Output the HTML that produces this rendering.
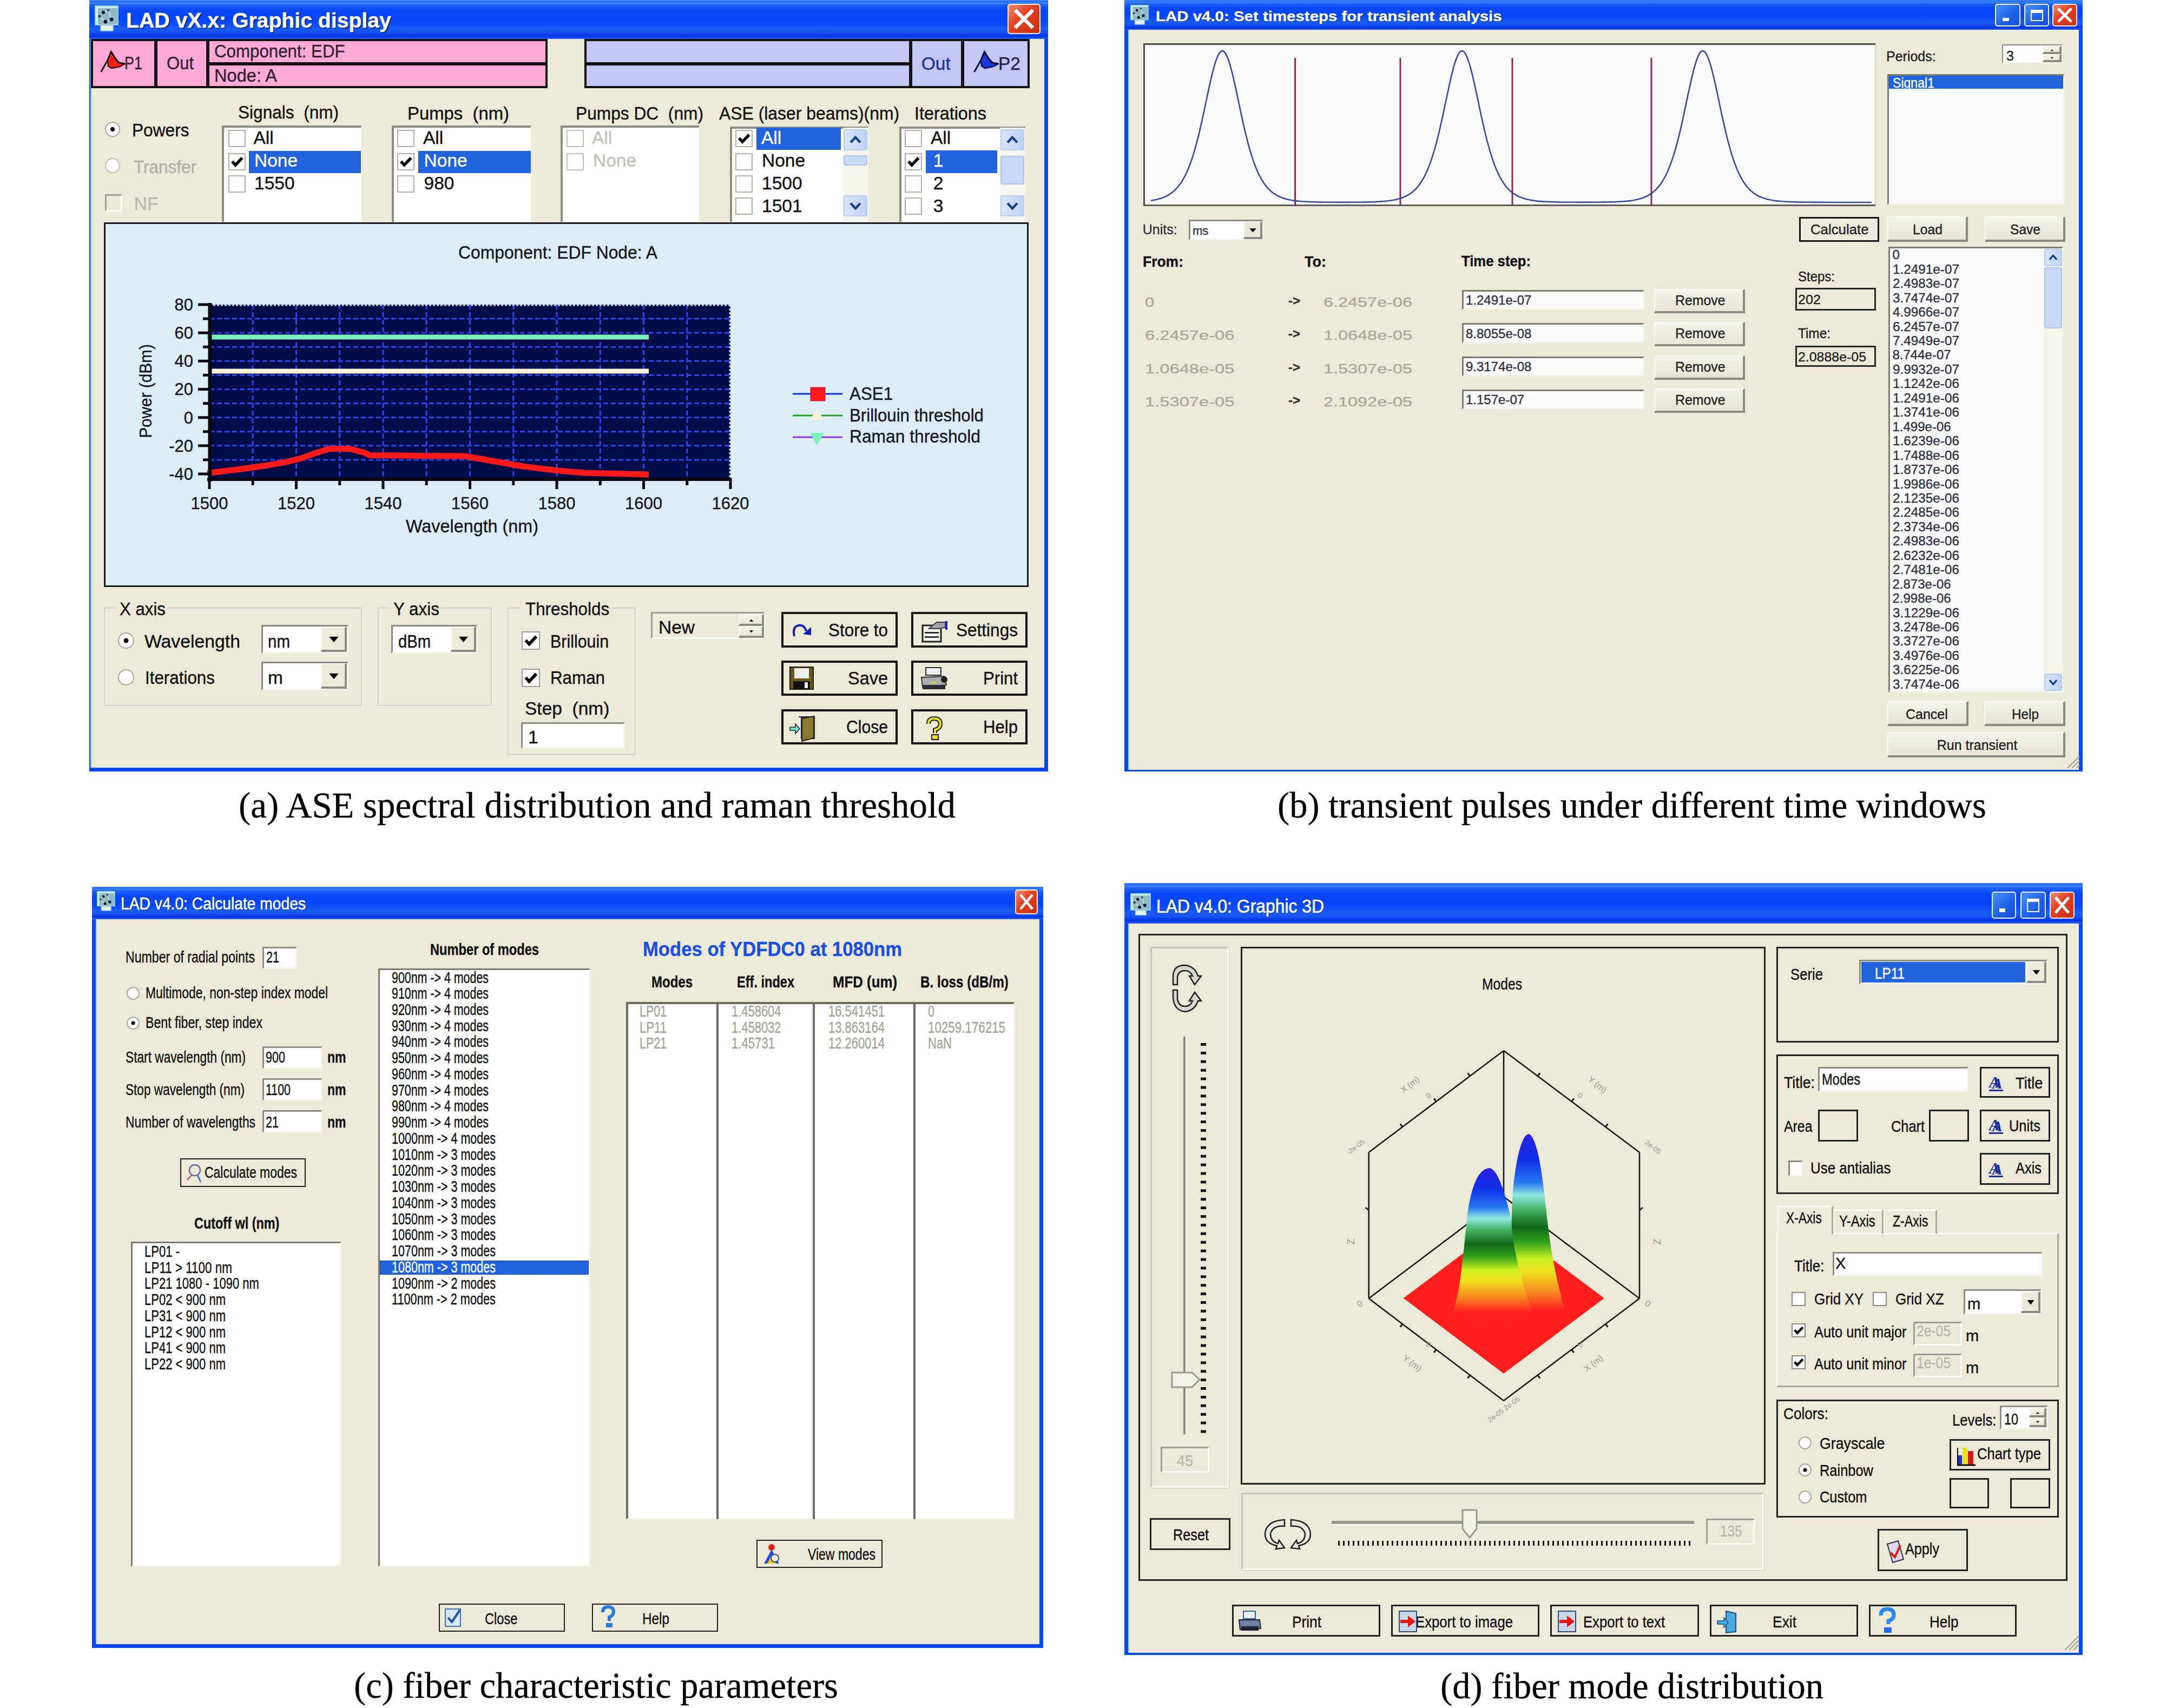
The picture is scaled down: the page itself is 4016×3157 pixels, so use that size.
<!DOCTYPE html><html><head><meta charset="utf-8"><style>
html,body{margin:0;padding:0;background:#fff;}
body{width:4016px;height:3157px;position:relative;overflow:hidden;font-family:"Liberation Sans",sans-serif;}
body div, body svg{position:absolute;}
.t{white-space:pre;line-height:normal;}
</style></head><body>
<div style="left:165.0px;top:0.0px;width:1772.0px;height:1426.0px;background:#0848F0;"></div>
<div style="left:165.0px;top:0.0px;width:1772.0px;height:72.0px;background:linear-gradient(#5AA0F0 0%,#2060F8 3%,#3A88F0 7%,#1C5CF4 14%,#0846F8 28%,#0644F8 50%,#0E4EF8 62%,#1A5CF4 74%,#1652F4 84%,#0032E8 93%,#2A62F0 100%);"></div>
<div style="left:168.0px;top:72.0px;width:1766.0px;height:1347.0px;background:#ECE9D8;"></div>
<div style="left:1930.0px;top:72.0px;width:7.0px;height:1354.0px;background:#0848F0;"></div>
<div style="left:167.0px;top:72.0px;width:2.0px;height:1347.0px;background:#8EC0F0;"></div>
<div style="left:1862.0px;top:7.0px;width:61.0px;height:56.0px;background:linear-gradient(135deg,#F08A70,#E0401F 45%,#C8300F);border:2px solid #F4F0F0;border-radius:5px;box-sizing:border-box;"></div>
<svg style="left:1862px;top:7px" width="61" height="56"><path d="M16.470000000000002 14.0 L44.53 42.0 M44.53 14.0 L16.470000000000002 42.0" stroke="#fff" stroke-width="6.7" stroke-linecap="square"/></svg>
<svg style="left:175px;top:10px" width="46.0" height="48.0" viewBox="0 0 46 48"><rect x="0" y="0" width="44" height="37" fill="#9ED0E8"/><rect x="2" y="2" width="40" height="33" fill="#C8F2EE"/><rect x="6" y="5" width="36" height="30" fill="#8EBAC4"/><rect x="11" y="37" width="23" height="10" fill="#E4F2EE" stroke="#9ED0E8" stroke-width="1.5"/><path d="M16 13 L9 20 L20 30 L31 26 L25 9 Z" stroke="#C8E0E8" stroke-width="2" fill="none"/><circle cx="16" cy="13" r="3.2" fill="#101830"/><circle cx="9" cy="20" r="2.8" fill="#404860"/><circle cx="20" cy="30" r="3.4" fill="#101020"/><circle cx="31" cy="26" r="3.6" fill="#0A1850"/><circle cx="25" cy="9" r="2.4" fill="#405070"/></svg>
<div class="t" style="left:232.5px;top:16.2px;font-size:38.40px;color:#fff;font-weight:700;font-family:'Liberation Sans', sans-serif;transform:scaleX(1.0204);transform-origin:0 0;text-shadow:2px 2px 1px #0A2A80;-webkit-text-stroke:0.35px #fff;">LAD vX.x: Graphic display</div>
<div style="left:168.0px;top:72.0px;width:844.0px;height:91.0px;background:#FFA9D6;border:4px solid #151015;box-sizing:border-box;"></div>
<div style="left:285.0px;top:72.0px;width:6.0px;height:91.0px;background:#151015;"></div>
<div style="left:381.0px;top:72.0px;width:6.0px;height:91.0px;background:#151015;"></div>
<div style="left:387.0px;top:115.0px;width:625.0px;height:6.0px;background:#151015;"></div>
<div style="left:1080.0px;top:72.0px;width:823.0px;height:91.0px;background:#C4C6F4;border:4px solid #151015;box-sizing:border-box;"></div>
<div style="left:1680.0px;top:72.0px;width:6.0px;height:91.0px;background:#151015;"></div>
<div style="left:1776.0px;top:72.0px;width:6.0px;height:91.0px;background:#151015;"></div>
<div style="left:1080.0px;top:115.0px;width:602.0px;height:6.0px;background:#151015;"></div>
<svg style="left:180px;top:90px" width="60" height="50"><path d="M19 21 L25.4 5.5 L33 18 L40 26 L51 28 L42 33 L26 36 L20 32 Z" fill="#FF2018" stroke="#3A0808" stroke-width="2.5" stroke-linejoin="round"/><path d="M6.6 43 L19 21 L25.4 5.5 L33 18 L40 26 L51 28" stroke="#201018" stroke-width="3" fill="none"/></svg>
<div class="t" style="left:230.0px;top:98.2px;font-size:33.50px;color:#302030;font-weight:400;font-family:'Liberation Sans', sans-serif;transform:scaleX(0.8041);transform-origin:0 0;-webkit-text-stroke:0.35px #302030;">P1</div>
<div class="t" style="left:308.0px;top:98.2px;font-size:33.50px;color:#302030;font-weight:400;font-family:'Liberation Sans', sans-serif;transform:scaleX(0.9270);transform-origin:0 0;-webkit-text-stroke:0.35px #302030;">Out</div>
<div class="t" style="left:396.0px;top:75.7px;font-size:33.50px;color:#302030;font-weight:400;font-family:'Liberation Sans', sans-serif;transform:scaleX(0.9336);transform-origin:0 0;-webkit-text-stroke:0.35px #302030;">Component: EDF</div>
<div class="t" style="left:396.0px;top:120.7px;font-size:33.50px;color:#302030;font-weight:400;font-family:'Liberation Sans', sans-serif;transform:scaleX(0.9727);transform-origin:0 0;-webkit-text-stroke:0.35px #302030;">Node: A</div>
<svg style="left:1794px;top:90px" width="60" height="50"><path d="M19 21 L25.4 5.5 L33 18 L40 26 L51 28 L42 33 L26 36 L20 32 Z" fill="#1838D8" stroke="#0A1050" stroke-width="2.5" stroke-linejoin="round"/><path d="M6.6 43 L19 21 L25.4 5.5 L33 18 L40 26 L51 28" stroke="#101040" stroke-width="3" fill="none"/></svg>
<div class="t" style="left:1702.7px;top:98.7px;font-size:33.50px;color:#1A30A0;font-weight:400;font-family:'Liberation Sans', sans-serif;-webkit-text-stroke:0.35px #1A30A0;">Out</div>
<div class="t" style="left:1845.0px;top:98.7px;font-size:33.50px;color:#202050;font-weight:400;font-family:'Liberation Sans', sans-serif;-webkit-text-stroke:0.35px #202050;">P2</div>
<svg style="left:193px;top:224px" width="30" height="30"><circle cx="15" cy="15" r="13" fill="#fff" stroke="#A8A8A0" stroke-width="2"/><circle cx="15" cy="15" r="4.16" fill="#000"/></svg>
<div class="t" style="left:244.4px;top:222.3px;font-size:33.50px;color:#101010;font-weight:400;font-family:'Liberation Sans', sans-serif;transform:scaleX(0.9443);transform-origin:0 0;-webkit-text-stroke:0.35px #101010;">Powers</div>
<svg style="left:193px;top:291px" width="30" height="30"><circle cx="15" cy="15" r="13" fill="#fff" stroke="#C0C0B8" stroke-width="2"/></svg>
<div class="t" style="left:247.0px;top:289.7px;font-size:33.50px;color:#B0B0A8;font-weight:400;font-family:'Liberation Sans', sans-serif;transform:scaleX(0.9397);transform-origin:0 0;-webkit-text-stroke:0.35px #B0B0A8;">Transfer</div>
<div style="left:194.0px;top:359.0px;width:32.0px;height:32.0px;border-style:solid;border-width:3px;border-color:#A0A098 #FFF #FFF #A0A098;box-sizing:border-box;"></div>
<div class="t" style="left:247.7px;top:357.7px;font-size:33.50px;color:#B8B8B0;font-weight:400;font-family:'Liberation Sans', sans-serif;-webkit-text-stroke:0.35px #B8B8B0;">NF</div>
<div class="t" style="left:439.6px;top:189.2px;font-size:33.50px;color:#101010;font-weight:400;font-family:'Liberation Sans', sans-serif;transform:scaleX(0.9427);transform-origin:0 0;-webkit-text-stroke:0.35px #101010;">Signals  (nm)</div>
<div class="t" style="left:753.0px;top:190.7px;font-size:33.50px;color:#101010;font-weight:400;font-family:'Liberation Sans', sans-serif;transform:scaleX(0.9803);transform-origin:0 0;-webkit-text-stroke:0.35px #101010;">Pumps  (nm)</div>
<div class="t" style="left:1064.4px;top:190.7px;font-size:33.50px;color:#101010;font-weight:400;font-family:'Liberation Sans', sans-serif;transform:scaleX(0.9462);transform-origin:0 0;-webkit-text-stroke:0.35px #101010;">Pumps DC  (nm)</div>
<div class="t" style="left:1329.0px;top:190.7px;font-size:33.50px;color:#101010;font-weight:400;font-family:'Liberation Sans', sans-serif;transform:scaleX(0.9517);transform-origin:0 0;-webkit-text-stroke:0.35px #101010;">ASE (laser beams)(nm)</div>
<div class="t" style="left:1690.0px;top:190.7px;font-size:33.50px;color:#101010;font-weight:400;font-family:'Liberation Sans', sans-serif;transform:scaleX(0.9648);transform-origin:0 0;-webkit-text-stroke:0.35px #101010;">Iterations</div>
<div style="left:410.0px;top:232.0px;width:259.0px;height:178.0px;background:#fff;border-style:solid;border-width:4px 2px 0 4px;border-color:#8C8C84 #F4F4EE #F4F4EE #8C8C84;box-sizing:border-box;"></div>
<div style="left:724.0px;top:232.0px;width:258.0px;height:178.0px;background:#fff;border-style:solid;border-width:4px 2px 0 4px;border-color:#8C8C84 #F4F4EE #F4F4EE #8C8C84;box-sizing:border-box;"></div>
<div style="left:1036.0px;top:232.0px;width:257.0px;height:178.0px;background:#fff;border-style:solid;border-width:4px 2px 0 4px;border-color:#8C8C84 #F4F4EE #F4F4EE #8C8C84;box-sizing:border-box;"></div>
<div style="left:1349.0px;top:234.0px;width:256.0px;height:176.0px;background:#fff;border-style:solid;border-width:4px 2px 0 4px;border-color:#8C8C84 #F4F4EE #F4F4EE #8C8C84;box-sizing:border-box;"></div>
<div style="left:1662.0px;top:234.0px;width:233.0px;height:176.0px;background:#fff;border-style:solid;border-width:4px 2px 0 4px;border-color:#8C8C84 #F4F4EE #F4F4EE #8C8C84;box-sizing:border-box;"></div>
<div style="left:422.0px;top:240.0px;width:32.0px;height:32.0px;background:#fff;border:2px solid #B0B0A8;box-sizing:border-box;"></div>
<div style="left:422.0px;top:283.0px;width:32.0px;height:32.0px;background:#fff;border:2px solid #B0B0A8;box-sizing:border-box;"></div>
<svg style="left:422px;top:283px" width="32" height="32" viewBox="0 0 10 10"><path d="M2.2 4.8 L4.1 6.9 L8 2.8" stroke="#000" stroke-width="1.7" fill="none"/></svg>
<div style="left:422.0px;top:324.0px;width:32.0px;height:32.0px;background:#fff;border:2px solid #B0B0A8;box-sizing:border-box;"></div>
<div style="left:460.0px;top:279.0px;width:207.0px;height:41.0px;background:#2262DC;"></div>
<div class="t" style="left:468.5px;top:236.1px;font-size:33.50px;color:#101010;font-weight:400;font-family:'Liberation Sans', sans-serif;-webkit-text-stroke:0.35px #101010;">All</div>
<div class="t" style="left:470.0px;top:277.7px;font-size:33.50px;color:#fff;font-weight:400;font-family:'Liberation Sans', sans-serif;-webkit-text-stroke:0.35px #fff;">None</div>
<div class="t" style="left:470.0px;top:320.3px;font-size:33.50px;color:#101010;font-weight:400;font-family:'Liberation Sans', sans-serif;-webkit-text-stroke:0.35px #101010;">1550</div>
<div style="left:734.0px;top:240.0px;width:32.0px;height:32.0px;background:#fff;border:2px solid #B0B0A8;box-sizing:border-box;"></div>
<div style="left:734.0px;top:283.0px;width:32.0px;height:32.0px;background:#fff;border:2px solid #B0B0A8;box-sizing:border-box;"></div>
<svg style="left:734px;top:283px" width="32" height="32" viewBox="0 0 10 10"><path d="M2.2 4.8 L4.1 6.9 L8 2.8" stroke="#000" stroke-width="1.7" fill="none"/></svg>
<div style="left:734.0px;top:324.0px;width:32.0px;height:32.0px;background:#fff;border:2px solid #B0B0A8;box-sizing:border-box;"></div>
<div style="left:773.0px;top:279.0px;width:208.0px;height:41.0px;background:#2262DC;"></div>
<div class="t" style="left:782.0px;top:236.1px;font-size:33.50px;color:#101010;font-weight:400;font-family:'Liberation Sans', sans-serif;-webkit-text-stroke:0.35px #101010;">All</div>
<div class="t" style="left:783.6px;top:277.7px;font-size:33.50px;color:#fff;font-weight:400;font-family:'Liberation Sans', sans-serif;-webkit-text-stroke:0.35px #fff;">None</div>
<div class="t" style="left:783.6px;top:320.3px;font-size:33.50px;color:#101010;font-weight:400;font-family:'Liberation Sans', sans-serif;-webkit-text-stroke:0.35px #101010;">980</div>
<div style="left:1047.0px;top:240.0px;width:32.0px;height:32.0px;background:#fff;border:2px solid #C0C0B8;box-sizing:border-box;"></div>
<div style="left:1047.0px;top:283.0px;width:32.0px;height:32.0px;background:#fff;border:2px solid #C0C0B8;box-sizing:border-box;"></div>
<div class="t" style="left:1094.0px;top:236.1px;font-size:33.50px;color:#C0C0B8;font-weight:400;font-family:'Liberation Sans', sans-serif;-webkit-text-stroke:0.35px #C0C0B8;">All</div>
<div class="t" style="left:1096.0px;top:277.7px;font-size:33.50px;color:#C0C0B8;font-weight:400;font-family:'Liberation Sans', sans-serif;-webkit-text-stroke:0.35px #C0C0B8;">None</div>
<div style="left:1359.0px;top:240.0px;width:32.0px;height:32.0px;background:#fff;border:2px solid #B0B0A8;box-sizing:border-box;"></div>
<svg style="left:1359px;top:240px" width="32" height="32" viewBox="0 0 10 10"><path d="M2.2 4.8 L4.1 6.9 L8 2.8" stroke="#000" stroke-width="1.7" fill="none"/></svg>
<div style="left:1359.0px;top:283.0px;width:32.0px;height:32.0px;background:#fff;border:2px solid #B0B0A8;box-sizing:border-box;"></div>
<div style="left:1359.0px;top:324.0px;width:32.0px;height:32.0px;background:#fff;border:2px solid #B0B0A8;box-sizing:border-box;"></div>
<div style="left:1359.0px;top:365.0px;width:32.0px;height:32.0px;background:#fff;border:2px solid #B0B0A8;box-sizing:border-box;"></div>
<div style="left:1398.0px;top:236.0px;width:156.0px;height:41.0px;background:#2262DC;"></div>
<div class="t" style="left:1407.0px;top:236.1px;font-size:33.50px;color:#fff;font-weight:400;font-family:'Liberation Sans', sans-serif;-webkit-text-stroke:0.35px #fff;">All</div>
<div class="t" style="left:1408.0px;top:277.7px;font-size:33.50px;color:#101010;font-weight:400;font-family:'Liberation Sans', sans-serif;-webkit-text-stroke:0.35px #101010;">None</div>
<div class="t" style="left:1408.0px;top:320.3px;font-size:33.50px;color:#101010;font-weight:400;font-family:'Liberation Sans', sans-serif;-webkit-text-stroke:0.35px #101010;">1500</div>
<div class="t" style="left:1408.0px;top:361.7px;font-size:33.50px;color:#101010;font-weight:400;font-family:'Liberation Sans', sans-serif;-webkit-text-stroke:0.35px #101010;">1501</div>
<div style="left:1558.0px;top:236.0px;width:45.0px;height:172.0px;background:#F4F3EC;"></div>
<div style="left:1559.0px;top:239.0px;width:44.0px;height:39.0px;background:linear-gradient(90deg,#D8E4FA,#C0D2F6);border:2px solid #B8CCF0;border-radius:4px;box-sizing:border-box;"></div>
<svg style="left:1559px;top:239px" width="44" height="39"><path d="M13.2 24.18 L22.0 14.82 L30.799999999999997 24.18" stroke="#1A3E8A" stroke-width="4.4" fill="none"/></svg>
<div style="left:1559.0px;top:287.0px;width:44.0px;height:19.0px;background:#C8D8F8;border:2px solid #B0C4EE;border-radius:4px;box-sizing:border-box;"></div>
<div style="left:1559.0px;top:361.0px;width:44.0px;height:39.0px;background:linear-gradient(90deg,#D8E4FA,#C0D2F6);border:2px solid #B8CCF0;border-radius:4px;box-sizing:border-box;"></div>
<svg style="left:1559px;top:361px" width="44" height="39"><path d="M13.2 14.82 L22.0 24.18 L30.799999999999997 14.82" stroke="#1A3E8A" stroke-width="4.4" fill="none"/></svg>
<div style="left:1672.0px;top:240.0px;width:32.0px;height:32.0px;background:#fff;border:2px solid #B0B0A8;box-sizing:border-box;"></div>
<div style="left:1672.0px;top:283.0px;width:32.0px;height:32.0px;background:#fff;border:2px solid #B0B0A8;box-sizing:border-box;"></div>
<svg style="left:1672px;top:283px" width="32" height="32" viewBox="0 0 10 10"><path d="M2.2 4.8 L4.1 6.9 L8 2.8" stroke="#000" stroke-width="1.7" fill="none"/></svg>
<div style="left:1672.0px;top:324.0px;width:32.0px;height:32.0px;background:#fff;border:2px solid #B0B0A8;box-sizing:border-box;"></div>
<div style="left:1672.0px;top:365.0px;width:32.0px;height:32.0px;background:#fff;border:2px solid #B0B0A8;box-sizing:border-box;"></div>
<div style="left:1711.0px;top:278.0px;width:132.0px;height:42.0px;background:#2262DC;"></div>
<div class="t" style="left:1720.0px;top:236.1px;font-size:33.50px;color:#101010;font-weight:400;font-family:'Liberation Sans', sans-serif;-webkit-text-stroke:0.35px #101010;">All</div>
<div class="t" style="left:1724.8px;top:277.7px;font-size:33.50px;color:#fff;font-weight:400;font-family:'Liberation Sans', sans-serif;-webkit-text-stroke:0.35px #fff;">1</div>
<div class="t" style="left:1724.8px;top:320.3px;font-size:33.50px;color:#101010;font-weight:400;font-family:'Liberation Sans', sans-serif;-webkit-text-stroke:0.35px #101010;">2</div>
<div class="t" style="left:1724.8px;top:361.7px;font-size:33.50px;color:#101010;font-weight:400;font-family:'Liberation Sans', sans-serif;-webkit-text-stroke:0.35px #101010;">3</div>
<div style="left:1848.0px;top:236.0px;width:45.0px;height:172.0px;background:#F4F3EC;"></div>
<div style="left:1849.0px;top:239.0px;width:44.0px;height:39.0px;background:linear-gradient(90deg,#D8E4FA,#C0D2F6);border:2px solid #B8CCF0;border-radius:4px;box-sizing:border-box;"></div>
<svg style="left:1849px;top:239px" width="44" height="39"><path d="M13.2 24.18 L22.0 14.82 L30.799999999999997 24.18" stroke="#1A3E8A" stroke-width="4.4" fill="none"/></svg>
<div style="left:1849.0px;top:288.0px;width:44.0px;height:53.0px;background:#C8D8F8;border:2px solid #B0C4EE;border-radius:4px;box-sizing:border-box;"></div>
<div style="left:1849.0px;top:361.0px;width:44.0px;height:39.0px;background:linear-gradient(90deg,#D8E4FA,#C0D2F6);border:2px solid #B8CCF0;border-radius:4px;box-sizing:border-box;"></div>
<svg style="left:1849px;top:361px" width="44" height="39"><path d="M13.2 14.82 L22.0 24.18 L30.799999999999997 14.82" stroke="#1A3E8A" stroke-width="4.4" fill="none"/></svg>
<div style="left:192.0px;top:411.0px;width:1709.0px;height:674.0px;background:#DCEDF8;border:3px solid #1A1A20;box-sizing:border-box;"></div>
<div class="t" style="left:847.0px;top:448.4px;font-size:33.50px;color:#151520;font-weight:400;font-family:'Liberation Sans', sans-serif;transform:scaleX(0.9499);transform-origin:0 0;-webkit-text-stroke:0.35px #151520;">Component: EDF Node: A</div>
<div style="left:387.0px;top:563.0px;width:963.0px;height:324.0px;background:#000C48;"></div>
<svg style="left:0px;top:0px" width="1940" height="1100"><line x1="467.2" y1="563" x2="467.2" y2="887" stroke="#2846F0" stroke-width="3" stroke-dasharray="9 5"/><line x1="547.5" y1="563" x2="547.5" y2="887" stroke="#2846F0" stroke-width="3" stroke-dasharray="9 5"/><line x1="627.8" y1="563" x2="627.8" y2="887" stroke="#2846F0" stroke-width="3" stroke-dasharray="9 5"/><line x1="708.0" y1="563" x2="708.0" y2="887" stroke="#2846F0" stroke-width="3" stroke-dasharray="9 5"/><line x1="788.2" y1="563" x2="788.2" y2="887" stroke="#2846F0" stroke-width="3" stroke-dasharray="9 5"/><line x1="868.5" y1="563" x2="868.5" y2="887" stroke="#2846F0" stroke-width="3" stroke-dasharray="9 5"/><line x1="948.8" y1="563" x2="948.8" y2="887" stroke="#2846F0" stroke-width="3" stroke-dasharray="9 5"/><line x1="1029.0" y1="563" x2="1029.0" y2="887" stroke="#2846F0" stroke-width="3" stroke-dasharray="9 5"/><line x1="1109.2" y1="563" x2="1109.2" y2="887" stroke="#2846F0" stroke-width="3" stroke-dasharray="9 5"/><line x1="1189.5" y1="563" x2="1189.5" y2="887" stroke="#2846F0" stroke-width="3" stroke-dasharray="9 5"/><line x1="1269.8" y1="563" x2="1269.8" y2="887" stroke="#2846F0" stroke-width="3" stroke-dasharray="9 5"/><line x1="387" y1="589.1" x2="1350" y2="589.1" stroke="#2846F0" stroke-width="3" stroke-dasharray="9 5"/><line x1="387" y1="615.2" x2="1350" y2="615.2" stroke="#2846F0" stroke-width="3" stroke-dasharray="9 5"/><line x1="387" y1="641.2" x2="1350" y2="641.2" stroke="#2846F0" stroke-width="3" stroke-dasharray="9 5"/><line x1="387" y1="667.3" x2="1350" y2="667.3" stroke="#2846F0" stroke-width="3" stroke-dasharray="9 5"/><line x1="387" y1="693.4" x2="1350" y2="693.4" stroke="#2846F0" stroke-width="3" stroke-dasharray="9 5"/><line x1="387" y1="719.5" x2="1350" y2="719.5" stroke="#2846F0" stroke-width="3" stroke-dasharray="9 5"/><line x1="387" y1="745.6" x2="1350" y2="745.6" stroke="#2846F0" stroke-width="3" stroke-dasharray="9 5"/><line x1="387" y1="771.7" x2="1350" y2="771.7" stroke="#2846F0" stroke-width="3" stroke-dasharray="9 5"/><line x1="387" y1="797.8" x2="1350" y2="797.8" stroke="#2846F0" stroke-width="3" stroke-dasharray="9 5"/><line x1="387" y1="823.8" x2="1350" y2="823.8" stroke="#2846F0" stroke-width="3" stroke-dasharray="9 5"/><line x1="387" y1="849.9" x2="1350" y2="849.9" stroke="#2846F0" stroke-width="3" stroke-dasharray="9 5"/><line x1="387" y1="564" x2="1350" y2="564" stroke="#C8D0F0" stroke-width="3" stroke-dasharray="4 3"/><line x1="1349" y1="563" x2="1349" y2="887" stroke="#C8D0F0" stroke-width="3" stroke-dasharray="4 3"/><line x1="382" y1="623" x2="1199" y2="623" stroke="#78F2BA" stroke-width="9"/><line x1="382" y1="686" x2="1199" y2="686" stroke="#FAF2D8" stroke-width="9"/><polyline points="383,874.6 407,871.8 444,867.2 490,860.8 526.5,854.3 554,847.9 582,837.8 609,829.5 646,829.5 674,836.8 683,841.4 770,842.4 859,843 967,862 1033,870 1080,874 1199,877" stroke="#FF1A1A" stroke-width="11" fill="none" stroke-linejoin="round"/><line x1="388" y1="560" x2="388" y2="890" stroke="#0A0A10" stroke-width="7"/><line x1="383" y1="886" x2="1352" y2="886" stroke="#0A0A10" stroke-width="6"/><line x1="366" y1="563.0" x2="389" y2="563.0" stroke="#0A0A10" stroke-width="5"/><line x1="375" y1="589.1" x2="389" y2="589.1" stroke="#0A0A10" stroke-width="5"/><line x1="366" y1="615.2" x2="389" y2="615.2" stroke="#0A0A10" stroke-width="5"/><line x1="375" y1="641.2" x2="389" y2="641.2" stroke="#0A0A10" stroke-width="5"/><line x1="366" y1="667.3" x2="389" y2="667.3" stroke="#0A0A10" stroke-width="5"/><line x1="375" y1="693.4" x2="389" y2="693.4" stroke="#0A0A10" stroke-width="5"/><line x1="366" y1="719.5" x2="389" y2="719.5" stroke="#0A0A10" stroke-width="5"/><line x1="375" y1="745.6" x2="389" y2="745.6" stroke="#0A0A10" stroke-width="5"/><line x1="366" y1="771.7" x2="389" y2="771.7" stroke="#0A0A10" stroke-width="5"/><line x1="375" y1="797.8" x2="389" y2="797.8" stroke="#0A0A10" stroke-width="5"/><line x1="366" y1="823.8" x2="389" y2="823.8" stroke="#0A0A10" stroke-width="5"/><line x1="375" y1="849.9" x2="389" y2="849.9" stroke="#0A0A10" stroke-width="5"/><line x1="366" y1="876.0" x2="389" y2="876.0" stroke="#0A0A10" stroke-width="5"/><line x1="387.0" y1="884" x2="387.0" y2="904" stroke="#0A0A10" stroke-width="5"/><line x1="467.2" y1="884" x2="467.2" y2="897" stroke="#0A0A10" stroke-width="5"/><line x1="547.5" y1="884" x2="547.5" y2="904" stroke="#0A0A10" stroke-width="5"/><line x1="627.8" y1="884" x2="627.8" y2="897" stroke="#0A0A10" stroke-width="5"/><line x1="708.0" y1="884" x2="708.0" y2="904" stroke="#0A0A10" stroke-width="5"/><line x1="788.2" y1="884" x2="788.2" y2="897" stroke="#0A0A10" stroke-width="5"/><line x1="868.5" y1="884" x2="868.5" y2="904" stroke="#0A0A10" stroke-width="5"/><line x1="948.8" y1="884" x2="948.8" y2="897" stroke="#0A0A10" stroke-width="5"/><line x1="1029.0" y1="884" x2="1029.0" y2="904" stroke="#0A0A10" stroke-width="5"/><line x1="1109.2" y1="884" x2="1109.2" y2="897" stroke="#0A0A10" stroke-width="5"/><line x1="1189.5" y1="884" x2="1189.5" y2="904" stroke="#0A0A10" stroke-width="5"/><line x1="1269.8" y1="884" x2="1269.8" y2="897" stroke="#0A0A10" stroke-width="5"/><line x1="1350.0" y1="884" x2="1350.0" y2="904" stroke="#0A0A10" stroke-width="5"/><line x1="1465" y1="728" x2="1557" y2="728" stroke="#1030F0" stroke-width="3"/><rect x="1498" y="716" width="27" height="25" fill="#FF1A1A" stroke="#C01040" stroke-width="1"/><line x1="1465" y1="768" x2="1557" y2="768" stroke="#20A020" stroke-width="3"/><path d="M1510 754 L1523 776 L1497 776 Z" fill="#FAF2D8"/><line x1="1465" y1="808" x2="1557" y2="808" stroke="#9030E0" stroke-width="3"/><path d="M1497 800 L1523 800 L1510 823 Z" fill="#78F2BA"/></svg>
<div class="t" style="left:322.6px;top:545.9px;font-size:31.00px;color:#151520;font-weight:400;font-family:'Liberation Sans', sans-serif;-webkit-text-stroke:0.35px #151520;">80</div>
<div class="t" style="left:322.6px;top:598.1px;font-size:31.00px;color:#151520;font-weight:400;font-family:'Liberation Sans', sans-serif;-webkit-text-stroke:0.35px #151520;">60</div>
<div class="t" style="left:322.6px;top:650.3px;font-size:31.00px;color:#151520;font-weight:400;font-family:'Liberation Sans', sans-serif;-webkit-text-stroke:0.35px #151520;">40</div>
<div class="t" style="left:322.6px;top:702.4px;font-size:31.00px;color:#151520;font-weight:400;font-family:'Liberation Sans', sans-serif;-webkit-text-stroke:0.35px #151520;">20</div>
<div class="t" style="left:339.8px;top:754.6px;font-size:31.00px;color:#151520;font-weight:400;font-family:'Liberation Sans', sans-serif;-webkit-text-stroke:0.35px #151520;">0</div>
<div class="t" style="left:312.2px;top:806.8px;font-size:31.00px;color:#151520;font-weight:400;font-family:'Liberation Sans', sans-serif;-webkit-text-stroke:0.35px #151520;">-20</div>
<div class="t" style="left:312.2px;top:858.9px;font-size:31.00px;color:#151520;font-weight:400;font-family:'Liberation Sans', sans-serif;-webkit-text-stroke:0.35px #151520;">-40</div>
<div class="t" style="left:352.5px;top:912.9px;font-size:31.00px;color:#151520;font-weight:400;font-family:'Liberation Sans', sans-serif;-webkit-text-stroke:0.35px #151520;">1500</div>
<div class="t" style="left:513.0px;top:912.9px;font-size:31.00px;color:#151520;font-weight:400;font-family:'Liberation Sans', sans-serif;-webkit-text-stroke:0.35px #151520;">1520</div>
<div class="t" style="left:673.5px;top:912.9px;font-size:31.00px;color:#151520;font-weight:400;font-family:'Liberation Sans', sans-serif;-webkit-text-stroke:0.35px #151520;">1540</div>
<div class="t" style="left:834.0px;top:912.9px;font-size:31.00px;color:#151520;font-weight:400;font-family:'Liberation Sans', sans-serif;-webkit-text-stroke:0.35px #151520;">1560</div>
<div class="t" style="left:994.5px;top:912.9px;font-size:31.00px;color:#151520;font-weight:400;font-family:'Liberation Sans', sans-serif;-webkit-text-stroke:0.35px #151520;">1580</div>
<div class="t" style="left:1155.0px;top:912.9px;font-size:31.00px;color:#151520;font-weight:400;font-family:'Liberation Sans', sans-serif;-webkit-text-stroke:0.35px #151520;">1600</div>
<div class="t" style="left:1315.5px;top:912.9px;font-size:31.00px;color:#151520;font-weight:400;font-family:'Liberation Sans', sans-serif;-webkit-text-stroke:0.35px #151520;">1620</div>
<div class="t" style="left:749.6px;top:953.7px;font-size:33.50px;color:#151520;font-weight:400;font-family:'Liberation Sans', sans-serif;transform:scaleX(0.9655);transform-origin:0 0;-webkit-text-stroke:0.35px #151520;">Wavelength (nm)</div>
<div class="t" style="left:269px;top:723px;font-size:32px;color:#151520;-webkit-text-stroke:0.35px #151520;transform:translate(-50%,-50%) rotate(-90deg) scaleX(0.93);">Power (dBm)</div>
<div class="t" style="left:1570.0px;top:709.0px;font-size:33.50px;color:#151520;font-weight:400;font-family:'Liberation Sans', sans-serif;transform:scaleX(0.9347);transform-origin:0 0;-webkit-text-stroke:0.35px #151520;">ASE1</div>
<div class="t" style="left:1570.0px;top:748.7px;font-size:33.50px;color:#151520;font-weight:400;font-family:'Liberation Sans', sans-serif;transform:scaleX(0.9312);transform-origin:0 0;-webkit-text-stroke:0.35px #151520;">Brillouin threshold</div>
<div class="t" style="left:1570.0px;top:787.7px;font-size:33.50px;color:#151520;font-weight:400;font-family:'Liberation Sans', sans-serif;transform:scaleX(0.9486);transform-origin:0 0;-webkit-text-stroke:0.35px #151520;">Raman threshold</div>
<div style="left:193.0px;top:1123.0px;width:476.0px;height:182.0px;border:2px solid #D0D0BF;box-shadow:inset 1px 1px 0 #fff, 1px 1px 0 #fff;box-sizing:border-box;"></div>
<div style="left:214.0px;top:1119.0px;width:96.0px;height:8.0px;background:#ECE9D8;"></div>
<div class="t" style="left:220.5px;top:1107.1px;font-size:33.50px;color:#101010;font-weight:400;font-family:'Liberation Sans', sans-serif;transform:scaleX(0.9311);transform-origin:0 0;-webkit-text-stroke:0.35px #101010;">X axis</div>
<svg style="left:217px;top:1168px" width="32" height="32"><circle cx="16" cy="16" r="14" fill="#fff" stroke="#A8A8A0" stroke-width="2"/><circle cx="16" cy="16" r="4.48" fill="#000"/></svg>
<div class="t" style="left:266.5px;top:1166.7px;font-size:33.50px;color:#101010;font-weight:400;font-family:'Liberation Sans', sans-serif;transform:scaleX(1.0074);transform-origin:0 0;-webkit-text-stroke:0.35px #101010;">Wavelength</div>
<svg style="left:217px;top:1236px" width="32" height="32"><circle cx="16" cy="16" r="14" fill="#fff" stroke="#A8A8A0" stroke-width="2"/></svg>
<div class="t" style="left:268.0px;top:1233.7px;font-size:33.50px;color:#101010;font-weight:400;font-family:'Liberation Sans', sans-serif;transform:scaleX(0.9358);transform-origin:0 0;-webkit-text-stroke:0.35px #101010;">Iterations</div>
<div style="left:483.0px;top:1155.0px;width:161.0px;height:53.0px;background:#fff;border-style:solid;border-width:3px;border-color:#8C8C84 #F4F4EE #F4F4EE #8C8C84;box-sizing:border-box;"></div>
<div style="left:593.0px;top:1158.0px;width:48.0px;height:47.0px;background:#ECE9D8;border-style:solid;border-width:2px 4px 4px 2px;border-color:#F8F8F4 #8A8A80 #8A8A80 #F8F8F4;box-sizing:border-box;"></div>
<svg style="left:593px;top:1158px" width="48" height="47"><path d="M15.36 18.8 L32.64 18.8 L24.0 29.14 Z" fill="#000"/></svg>
<div class="t" style="left:495.0px;top:1166.7px;font-size:33.50px;color:#101010;font-weight:400;font-family:'Liberation Sans', sans-serif;transform:scaleX(0.8805);transform-origin:0 0;-webkit-text-stroke:0.35px #101010;">nm</div>
<div style="left:483.0px;top:1223.0px;width:161.0px;height:53.0px;background:#fff;border-style:solid;border-width:3px;border-color:#8C8C84 #F4F4EE #F4F4EE #8C8C84;box-sizing:border-box;"></div>
<div style="left:593.0px;top:1226.0px;width:48.0px;height:47.0px;background:#ECE9D8;border-style:solid;border-width:2px 4px 4px 2px;border-color:#F8F8F4 #8A8A80 #8A8A80 #F8F8F4;box-sizing:border-box;"></div>
<svg style="left:593px;top:1226px" width="48" height="47"><path d="M15.36 18.8 L32.64 18.8 L24.0 29.14 Z" fill="#000"/></svg>
<div class="t" style="left:495.0px;top:1233.7px;font-size:33.50px;color:#101010;font-weight:400;font-family:'Liberation Sans', sans-serif;-webkit-text-stroke:0.35px #101010;">m</div>
<div style="left:698.0px;top:1123.0px;width:211.0px;height:182.0px;border:2px solid #D0D0BF;box-shadow:inset 1px 1px 0 #fff, 1px 1px 0 #fff;box-sizing:border-box;"></div>
<div style="left:718.0px;top:1119.0px;width:82.0px;height:8.0px;background:#ECE9D8;"></div>
<div class="t" style="left:726.7px;top:1107.1px;font-size:33.50px;color:#101010;font-weight:400;font-family:'Liberation Sans', sans-serif;transform:scaleX(0.9380);transform-origin:0 0;-webkit-text-stroke:0.35px #101010;">Y axis</div>
<div style="left:723.0px;top:1155.0px;width:160.0px;height:53.0px;background:#fff;border-style:solid;border-width:3px;border-color:#8C8C84 #F4F4EE #F4F4EE #8C8C84;box-sizing:border-box;"></div>
<div style="left:833.0px;top:1158.0px;width:47.0px;height:47.0px;background:#ECE9D8;border-style:solid;border-width:2px 4px 4px 2px;border-color:#F8F8F4 #8A8A80 #8A8A80 #F8F8F4;box-sizing:border-box;"></div>
<svg style="left:833px;top:1158px" width="47" height="47"><path d="M15.040000000000001 18.8 L31.96 18.8 L23.5 29.14 Z" fill="#000"/></svg>
<div class="t" style="left:736.0px;top:1166.7px;font-size:33.50px;color:#101010;font-weight:400;font-family:'Liberation Sans', sans-serif;transform:scaleX(0.8716);transform-origin:0 0;-webkit-text-stroke:0.35px #101010;">dBm</div>
<div style="left:938.0px;top:1123.0px;width:237.0px;height:273.0px;border:2px solid #D0D0BF;box-shadow:inset 1px 1px 0 #fff, 1px 1px 0 #fff;box-sizing:border-box;"></div>
<div style="left:962.0px;top:1119.0px;width:148.0px;height:8.0px;background:#ECE9D8;"></div>
<div class="t" style="left:970.7px;top:1107.1px;font-size:33.50px;color:#101010;font-weight:400;font-family:'Liberation Sans', sans-serif;transform:scaleX(0.9357);transform-origin:0 0;-webkit-text-stroke:0.35px #101010;">Thresholds</div>
<div style="left:964.0px;top:1167.0px;width:34.0px;height:34.0px;background:#fff;border:2px solid #A0A098;box-sizing:border-box;"></div>
<svg style="left:964px;top:1167px" width="34" height="34" viewBox="0 0 10 10"><path d="M2.2 4.8 L4.1 6.9 L8 2.8" stroke="#000" stroke-width="1.7" fill="none"/></svg>
<div class="t" style="left:1016.7px;top:1166.7px;font-size:33.50px;color:#101010;font-weight:400;font-family:'Liberation Sans', sans-serif;transform:scaleX(0.9069);transform-origin:0 0;-webkit-text-stroke:0.35px #101010;">Brillouin</div>
<div style="left:964.0px;top:1236.0px;width:34.0px;height:34.0px;background:#fff;border:2px solid #A0A098;box-sizing:border-box;"></div>
<svg style="left:964px;top:1236px" width="34" height="34" viewBox="0 0 10 10"><path d="M2.2 4.8 L4.1 6.9 L8 2.8" stroke="#000" stroke-width="1.7" fill="none"/></svg>
<div class="t" style="left:1016.7px;top:1233.7px;font-size:33.50px;color:#101010;font-weight:400;font-family:'Liberation Sans', sans-serif;transform:scaleX(0.9349);transform-origin:0 0;-webkit-text-stroke:0.35px #101010;">Raman</div>
<div class="t" style="left:970.0px;top:1291.2px;font-size:33.50px;color:#101010;font-weight:400;font-family:'Liberation Sans', sans-serif;-webkit-text-stroke:0.35px #101010;">Step  (nm)</div>
<div style="left:963.0px;top:1335.0px;width:192.0px;height:49.0px;background:#fff;border-style:solid;border-width:3px;border-color:#8C8C84 #F4F4EE #F4F4EE #8C8C84;box-sizing:border-box;"></div>
<div class="t" style="left:976.0px;top:1343.7px;font-size:33.50px;color:#101010;font-weight:400;font-family:'Liberation Sans', sans-serif;-webkit-text-stroke:0.35px #101010;">1</div>
<div style="left:1203.0px;top:1131.0px;width:211.0px;height:50.0px;background:#ECE9D8;border-style:solid;border-width:3px;border-color:#9C9C94 #FAFAF4 #FAFAF4 #9C9C94;box-sizing:border-box;"></div>
<div class="t" style="left:1217.0px;top:1140.7px;font-size:33.50px;color:#101010;font-weight:400;font-family:'Liberation Sans', sans-serif;-webkit-text-stroke:0.35px #101010;">New</div>
<div style="left:1365.0px;top:1135.0px;width:47.0px;height:22.0px;background:linear-gradient(#F4F2E8,#E8E5D6);border-style:solid;border-width:2px 4px 4px 2px;border-color:#F8F8F4 #8A8A80 #8A8A80 #F8F8F4;box-sizing:border-box;"></div>
<div style="left:1365.0px;top:1157.0px;width:47.0px;height:22.0px;background:linear-gradient(#F4F2E8,#E8E5D6);border-style:solid;border-width:2px 4px 4px 2px;border-color:#F8F8F4 #8A8A80 #8A8A80 #F8F8F4;box-sizing:border-box;"></div>
<svg style="left:1365px;top:1135px" width="47" height="44"><path d="M19.54 13.64 L27.46 13.64 L23.5 9.68 Z M19.54 30.36 L27.46 30.36 L23.5 34.32 Z" fill="#000"/></svg>
<div style="left:1444.0px;top:1131.0px;width:215.0px;height:66.0px;background:#ECE9D8;border:4px solid #151515;box-sizing:border-box;"></div>
<div class="t" style="left:1531.0px;top:1145.7px;font-size:33.50px;color:#101010;font-weight:400;font-family:'Liberation Sans', sans-serif;transform:scaleX(0.9382);transform-origin:0 0;-webkit-text-stroke:0.35px #101010;">Store to</div>
<div style="left:1684.0px;top:1131.0px;width:215.0px;height:66.0px;background:#ECE9D8;border:4px solid #151515;box-sizing:border-box;"></div>
<div class="t" style="left:1767.0px;top:1145.7px;font-size:33.50px;color:#101010;font-weight:400;font-family:'Liberation Sans', sans-serif;transform:scaleX(0.9414);transform-origin:0 0;-webkit-text-stroke:0.35px #101010;">Settings</div>
<div style="left:1444.0px;top:1221.0px;width:215.0px;height:65.0px;background:#ECE9D8;border:4px solid #151515;box-sizing:border-box;"></div>
<div class="t" style="left:1567.0px;top:1235.2px;font-size:33.50px;color:#101010;font-weight:400;font-family:'Liberation Sans', sans-serif;transform:scaleX(0.9688);transform-origin:0 0;-webkit-text-stroke:0.35px #101010;">Save</div>
<div style="left:1684.0px;top:1221.0px;width:215.0px;height:65.0px;background:#ECE9D8;border:4px solid #151515;box-sizing:border-box;"></div>
<div class="t" style="left:1817.0px;top:1235.2px;font-size:33.50px;color:#101010;font-weight:400;font-family:'Liberation Sans', sans-serif;transform:scaleX(0.9297);transform-origin:0 0;-webkit-text-stroke:0.35px #101010;">Print</div>
<div style="left:1444.0px;top:1311.0px;width:215.0px;height:65.0px;background:#ECE9D8;border:4px solid #151515;box-sizing:border-box;"></div>
<div class="t" style="left:1564.0px;top:1325.2px;font-size:33.50px;color:#101010;font-weight:400;font-family:'Liberation Sans', sans-serif;transform:scaleX(0.8996);transform-origin:0 0;-webkit-text-stroke:0.35px #101010;">Close</div>
<div style="left:1684.0px;top:1311.0px;width:215.0px;height:65.0px;background:#ECE9D8;border:4px solid #151515;box-sizing:border-box;"></div>
<div class="t" style="left:1817.0px;top:1325.2px;font-size:33.50px;color:#101010;font-weight:400;font-family:'Liberation Sans', sans-serif;transform:scaleX(0.9297);transform-origin:0 0;-webkit-text-stroke:0.35px #101010;">Help</div>
<svg style="left:1462px;top:1152px" width="42" height="26"><path d="M6 24 Q2 6 14 4 Q24 2 28 14" stroke="#1020B0" stroke-width="4" fill="none"/><path d="M22 20 L37 7 L37 22 Z" fill="#1020B0"/></svg>
<svg style="left:1703px;top:1146px" width="50" height="42"><rect x="2" y="10" width="34" height="30" fill="#F4F4F0" stroke="#202020" stroke-width="3"/><rect x="6" y="22" width="26" height="3" fill="#303030"/><rect x="6" y="30" width="26" height="3" fill="#303030"/><path d="M14 16 L28 4 L44 4 L44 14 L30 16 Z" fill="#A0A0A8" stroke="#404048" stroke-width="2"/><rect x="44" y="2" width="4" height="16" fill="#2020C0"/></svg>
<svg style="left:1459px;top:1232px" width="48" height="44"><rect x="1" y="1" width="43" height="41" fill="#6A5A18" stroke="#1A1A1A" stroke-width="2"/><rect x="9" y="3" width="27" height="19" fill="#EDEDED"/><rect x="7" y="27" width="31" height="15" fill="#101010"/><rect x="28" y="29" width="6" height="11" fill="#E8E8E8"/></svg>
<svg style="left:1701px;top:1232px" width="52" height="44"><rect x="10" y="2" width="28" height="14" fill="#F0F0F0" stroke="#303030" stroke-width="2"/><path d="M2 20 L44 18 L48 34 L4 38 Z" fill="#A8AEB0" stroke="#303038" stroke-width="2"/><rect x="4" y="34" width="42" height="8" fill="#2A2A30"/><circle cx="44" cy="24" r="6" fill="#202020"/><rect x="20" y="28" width="10" height="3" fill="#E8D020"/></svg>
<svg style="left:1458px;top:1322px" width="54" height="50"><rect x="18" y="2" width="30" height="42" fill="#2A2A30"/><path d="M24 6 L46 2 L46 42 L24 48 Z" fill="#8A7A30" stroke="#202020" stroke-width="2"/><rect x="18" y="4" width="4" height="42" fill="#F0F0F0"/><path d="M2 22 L12 22 L12 16 L20 25 L12 34 L12 28 L2 28 Z" fill="#70E8D0" stroke="#202020" stroke-width="1.5"/></svg>
<svg style="left:1708px;top:1324px" width="38" height="46"><path d="M8 14 Q8 4 18 4 Q30 4 30 14 Q30 22 20 25 L20 31" stroke="#202020" stroke-width="8" fill="none"/><path d="M8 14 Q8 4 18 4 Q30 4 30 14 Q30 22 20 25 L20 31" stroke="#E8E020" stroke-width="4" fill="none"/><rect x="14" y="34" width="12" height="9" fill="#E8E020" stroke="#202020" stroke-width="2"/></svg>
<div class="t" style="left:441.0px;top:1449.4px;font-size:68.00px;color:#000;font-weight:400;font-family:'Liberation Serif', serif;transform:scaleX(0.9826);transform-origin:0 0;-webkit-text-stroke:0.3px #000;">(a) ASE spectral distribution and raman threshold</div>
<div style="left:2078.0px;top:0.0px;width:1771.0px;height:1426.0px;background:#0848F0;"></div>
<div style="left:2078.0px;top:0.0px;width:1771.0px;height:55.0px;background:linear-gradient(#5AA0F0 0%,#2060F8 3%,#3A88F0 7%,#1C5CF4 14%,#0846F8 28%,#0644F8 50%,#0E4EF8 62%,#1A5CF4 74%,#1652F4 84%,#0032E8 93%,#2A62F0 100%);"></div>
<div style="left:2085.0px;top:55.0px;width:1757.0px;height:1368.0px;background:#ECE9D8;"></div>
<div style="left:2085.0px;top:55.0px;width:2.0px;height:1368.0px;background:#A8CCF4;"></div>
<div style="left:3687.0px;top:7.0px;width:47.0px;height:42.0px;background:linear-gradient(135deg,#4A90F8,#1E5FE8 60%,#1850D8);border:2px solid #F0F4FF;border-radius:5px;box-sizing:border-box;"></div>
<div style="left:3701.1px;top:33.0px;width:11.8px;height:5.5px;background:#fff;"></div>
<div style="left:3741.0px;top:7.0px;width:46.0px;height:42.0px;background:linear-gradient(135deg,#4A90F8,#1E5FE8 60%,#1850D8);border:2px solid #F0F4FF;border-radius:5px;box-sizing:border-box;"></div>
<div style="left:3752.5px;top:17.5px;width:23.0px;height:21.0px;border:2px solid #fff;border-top-width:6px;box-sizing:border-box;"></div>
<div style="left:3793.0px;top:7.0px;width:46.0px;height:42.0px;background:linear-gradient(135deg,#F08A70,#E0401F 45%,#C8300F);border:2px solid #F4F0F0;border-radius:5px;box-sizing:border-box;"></div>
<svg style="left:3793px;top:7px" width="46" height="42"><path d="M12.420000000000002 10.5 L33.58 31.5 M33.58 10.5 L12.420000000000002 31.5" stroke="#fff" stroke-width="5.1" stroke-linecap="square"/></svg>
<svg style="left:2089px;top:9px" width="35.3" height="36.8" viewBox="0 0 46 48"><rect x="0" y="0" width="44" height="37" fill="#9ED0E8"/><rect x="2" y="2" width="40" height="33" fill="#C8F2EE"/><rect x="6" y="5" width="36" height="30" fill="#8EBAC4"/><rect x="11" y="37" width="23" height="10" fill="#E4F2EE" stroke="#9ED0E8" stroke-width="1.5"/><path d="M16 13 L9 20 L20 30 L31 26 L25 9 Z" stroke="#C8E0E8" stroke-width="2" fill="none"/><circle cx="16" cy="13" r="3.2" fill="#101830"/><circle cx="9" cy="20" r="2.8" fill="#404860"/><circle cx="20" cy="30" r="3.4" fill="#101020"/><circle cx="31" cy="26" r="3.6" fill="#0A1850"/><circle cx="25" cy="9" r="2.4" fill="#405070"/></svg>
<div class="t" style="left:2136.0px;top:15.7px;font-size:25.70px;color:#fff;font-weight:700;font-family:'Liberation Sans', sans-serif;transform:scaleX(1.1460);transform-origin:0 0;text-shadow:1px 1px 1px #0A2A80;-webkit-text-stroke:0.35px #fff;">LAD v4.0: Set timesteps for transient analysis</div>
<div style="left:2113.0px;top:80.0px;width:1354.0px;height:301.0px;background:#FAFAFA;border-style:solid;border-width:3px 2px 3px 3px;border-color:#4A4A48 #D8D8D0 #5A5A58 #4A4A48;box-sizing:border-box;"></div>
<svg style="left:0;top:0" width="3500" height="400"><line x1="2393.6" y1="107" x2="2393.6" y2="380" stroke="#8A2A5A" stroke-width="3"/><line x1="2588" y1="107" x2="2588" y2="380" stroke="#8A2A5A" stroke-width="3"/><line x1="2795" y1="107" x2="2795" y2="380" stroke="#8A2A5A" stroke-width="3"/><line x1="3052" y1="107" x2="3052" y2="380" stroke="#8A2A5A" stroke-width="3"/><polyline points="2127,370.7 2130,370.2 2133,369.7 2136,369.1 2139,368.4 2142,367.6 2145,366.7 2148,365.7 2151,364.5 2154,363.2 2157,361.8 2160,360.1 2163,358.2 2166,356.0 2169,353.5 2172,350.8 2175,347.6 2178,344.1 2181,340.2 2184,335.7 2187,330.7 2190,325.2 2193,319.0 2196,312.1 2199,304.6 2202,296.2 2205,287.1 2208,277.1 2211,266.4 2214,254.8 2217,242.5 2220,229.5 2223,216.0 2226,202.0 2229,187.8 2232,173.6 2235,159.7 2238,146.3 2241,133.8 2244,122.5 2247,112.7 2250,104.7 2253,98.8 2256,95.2 2259,94.0 2262,95.2 2265,98.8 2268,104.7 2271,112.7 2274,122.5 2277,133.8 2280,146.3 2283,159.7 2286,173.6 2289,187.8 2292,202.0 2295,216.0 2298,229.5 2301,242.5 2304,254.8 2307,266.4 2310,277.1 2313,287.1 2316,296.2 2319,304.6 2322,312.1 2325,319.0 2328,325.2 2331,330.7 2334,335.7 2337,340.2 2340,344.1 2343,347.6 2346,350.8 2349,353.5 2352,356.0 2355,358.2 2358,360.1 2361,361.8 2364,363.2 2367,364.5 2370,365.7 2373,366.7 2376,367.6 2379,368.4 2382,369.1 2385,369.7 2388,370.2 2391,370.7 2394,371.1 2397,371.4 2400,371.8 2403,372.0 2406,372.3 2409,372.5 2412,372.7 2415,372.8 2418,373.0 2421,373.1 2424,373.2 2427,373.3 2430,373.4 2433,373.5 2436,373.5 2439,373.6 2442,373.6 2445,373.7 2448,373.7 2451,373.7 2454,373.8 2457,373.8 2460,373.8 2463,373.8 2466,373.8 2469,373.9 2472,373.9 2475,373.9 2478,373.9 2481,373.9 2484,373.9 2487,373.9 2490,373.9 2493,373.9 2496,373.8 2499,373.8 2502,373.8 2505,373.8 2508,373.8 2511,373.7 2514,373.7 2517,373.7 2520,373.6 2523,373.6 2526,373.5 2529,373.4 2532,373.4 2535,373.3 2538,373.2 2541,373.1 2544,372.9 2547,372.8 2550,372.6 2553,372.4 2556,372.2 2559,371.9 2562,371.7 2565,371.3 2568,371.0 2571,370.5 2574,370.0 2577,369.5 2580,368.9 2583,368.1 2586,367.3 2589,366.4 2592,365.3 2595,364.1 2598,362.8 2601,361.2 2604,359.5 2607,357.5 2610,355.2 2613,352.6 2616,349.8 2619,346.5 2622,342.9 2625,338.7 2628,334.1 2631,329.0 2634,323.2 2637,316.8 2640,309.7 2643,301.9 2646,293.3 2649,283.9 2652,273.6 2655,262.6 2658,250.8 2661,238.3 2664,225.1 2667,211.4 2670,197.3 2673,183.1 2676,168.9 2679,155.1 2682,142.0 2685,129.9 2688,119.0 2691,109.8 2694,102.5 2697,97.4 2700,94.5 2703,94.1 2706,96.2 2709,100.6 2712,107.2 2715,115.8 2718,126.1 2721,137.8 2724,150.7 2727,164.3 2730,178.3 2733,192.6 2736,206.7 2739,220.6 2742,233.9 2745,246.7 2748,258.8 2751,270.0 2754,280.5 2757,290.2 2760,299.1 2763,307.2 2766,314.5 2769,321.1 2772,327.1 2775,332.5 2778,337.3 2781,341.5 2784,345.3 2787,348.7 2790,351.7 2793,354.4 2796,356.7 2799,358.8 2802,360.6 2805,362.3 2808,363.7 2811,364.9 2814,366.1 2817,367.0 2820,367.9 2823,368.6 2826,369.3 2829,369.9 2832,370.4 2835,370.8 2838,371.2 2841,371.6 2844,371.9 2847,372.1 2850,372.4 2853,372.6 2856,372.7 2859,372.9 2862,373.0 2865,373.1 2868,373.2 2871,373.3 2874,373.4 2877,373.5 2880,373.6 2883,373.6 2886,373.7 2889,373.7 2892,373.7 2895,373.8 2898,373.8 2901,373.8 2904,373.8 2907,373.8 2910,373.8 2913,373.9 2916,373.9 2919,373.9 2922,373.9 2925,373.9 2928,373.9 2931,373.9 2934,373.9 2937,373.9 2940,373.8 2943,373.8 2946,373.8 2949,373.8 2952,373.8 2955,373.7 2958,373.7 2961,373.7 2964,373.6 2967,373.6 2970,373.5 2973,373.5 2976,373.4 2979,373.3 2982,373.2 2985,373.1 2988,373.0 2991,372.8 2994,372.7 2997,372.5 3000,372.3 3003,372.0 3006,371.8 3009,371.4 3012,371.1 3015,370.7 3018,370.2 3021,369.7 3024,369.1 3027,368.4 3030,367.6 3033,366.7 3036,365.7 3039,364.5 3042,363.2 3045,361.8 3048,360.1 3051,358.2 3054,356.0 3057,353.5 3060,350.8 3063,347.6 3066,344.1 3069,340.2 3072,335.7 3075,330.7 3078,325.2 3081,319.0 3084,312.1 3087,304.6 3090,296.2 3093,287.1 3096,277.1 3099,266.4 3102,254.8 3105,242.5 3108,229.5 3111,216.0 3114,202.0 3117,187.8 3120,173.6 3123,159.7 3126,146.3 3129,133.8 3132,122.5 3135,112.7 3138,104.7 3141,98.8 3144,95.2 3147,94.0 3150,95.2 3153,98.8 3156,104.7 3159,112.7 3162,122.5 3165,133.8 3168,146.3 3171,159.7 3174,173.6 3177,187.8 3180,202.0 3183,216.0 3186,229.5 3189,242.5 3192,254.8 3195,266.4 3198,277.1 3201,287.1 3204,296.2 3207,304.6 3210,312.1 3213,319.0 3216,325.2 3219,330.7 3222,335.7 3225,340.2 3228,344.1 3231,347.6 3234,350.8 3237,353.5 3240,356.0 3243,358.2 3246,360.1 3249,361.8 3252,363.2 3255,364.5 3258,365.7 3261,366.7 3264,367.6 3267,368.4 3270,369.1 3273,369.7 3276,370.2 3279,370.7 3282,371.1 3285,371.4 3288,371.8 3291,372.0 3294,372.3 3297,372.5 3300,372.7 3303,372.8 3306,373.0 3309,373.1 3312,373.2 3315,373.3 3318,373.4 3321,373.5 3324,373.5 3327,373.6 3330,373.6 3333,373.7 3336,373.7 3339,373.8 3342,373.8 3345,373.8 3348,373.8 3351,373.9 3354,373.9 3357,373.9 3360,373.9 3363,373.9 3366,373.9 3369,373.9 3372,373.9 3375,374.0 3378,374.0 3381,374.0 3384,374.0 3387,374.0 3390,374.0 3393,374.0 3396,374.0 3399,374.0 3402,374.0 3405,374.0 3408,374.0 3411,374.0 3414,374.0 3417,374.0 3420,374.0 3423,374.0 3426,374.0 3429,374.0 3432,374.0 3435,374.0 3438,374.0 3441,374.0 3444,374.0 3447,374.0 3450,374.0 3453,374.0 3456,374.0 3459,374.0" fill="none" stroke="#3848A0" stroke-width="2.6"/></svg>
<div class="t" style="left:3486.0px;top:90.4px;font-size:25.00px;color:#202020;font-weight:400;font-family:'Liberation Sans', sans-serif;-webkit-text-stroke:0.35px #202020;">Periods:</div>
<div style="left:3700.0px;top:82.0px;width:112.0px;height:35.0px;background:#fff;border-style:solid;border-width:2px;border-color:#8C8C84 #F4F4EE #F4F4EE #8C8C84;box-sizing:border-box;"></div>
<div class="t" style="left:3708.0px;top:89.4px;font-size:25.00px;color:#202020;font-weight:400;font-family:'Liberation Sans', sans-serif;-webkit-text-stroke:0.35px #202020;">3</div>
<div style="left:3775.0px;top:85.0px;width:35.0px;height:15.0px;background:linear-gradient(#F4F2E8,#E8E5D6);border-style:solid;border-width:2px 4px 4px 2px;border-color:#F8F8F4 #8A8A80 #8A8A80 #F8F8F4;box-sizing:border-box;"></div>
<div style="left:3775.0px;top:100.0px;width:35.0px;height:15.0px;background:linear-gradient(#F4F2E8,#E8E5D6);border-style:solid;border-width:2px 4px 4px 2px;border-color:#F8F8F4 #8A8A80 #8A8A80 #F8F8F4;box-sizing:border-box;"></div>
<svg style="left:3775px;top:85px" width="35" height="30"><path d="M14.8 9.3 L20.2 9.3 L17.5 6.600000000000001 Z M14.8 20.7 L20.2 20.7 L17.5 23.4 Z" fill="#000"/></svg>
<div style="left:3488.0px;top:137.0px;width:328.0px;height:242.0px;background:#FAFAFA;border-style:solid;border-width:3px;border-color:#7C7C74 #F4F4EE #F4F4EE #7C7C74;box-sizing:border-box;"></div>
<div style="left:3491.0px;top:140.0px;width:322.0px;height:24.0px;background:#2262DC;"></div>
<div class="t" style="left:3498.0px;top:138.7px;font-size:25.00px;color:#fff;font-weight:400;font-family:'Liberation Sans', sans-serif;transform:scaleX(0.9235);transform-origin:0 0;-webkit-text-stroke:0.35px #fff;">Signal1</div>
<div class="t" style="left:2111.7px;top:410.2px;font-size:25.00px;color:#303040;font-weight:400;font-family:'Liberation Sans', sans-serif;-webkit-text-stroke:0.35px #303040;">Units:</div>
<div style="left:2197.0px;top:406.0px;width:138.0px;height:38.0px;background:#fff;border-style:solid;border-width:3px;border-color:#8C8C84 #F4F4EE #F4F4EE #8C8C84;box-sizing:border-box;"></div>
<div style="left:2298.0px;top:409.0px;width:35.0px;height:33.0px;background:#ECE9D8;border-style:solid;border-width:2px 4px 4px 2px;border-color:#F8F8F4 #8A8A80 #8A8A80 #F8F8F4;box-sizing:border-box;"></div>
<svg style="left:2298px;top:409px" width="35" height="33"><path d="M11.200000000000001 13.200000000000001 L23.8 13.200000000000001 L17.5 20.46 Z" fill="#000"/></svg>
<div class="t" style="left:2204.0px;top:414.1px;font-size:22.00px;color:#303040;font-weight:400;font-family:'Liberation Sans', sans-serif;-webkit-text-stroke:0.35px #303040;">ms</div>
<div style="left:3325.0px;top:401.0px;width:148.0px;height:46.0px;background:#EEEBDC;border:3px solid #151515;box-sizing:border-box;"></div>
<div class="t" style="left:3346.0px;top:409.8px;font-size:25.00px;color:#202020;font-weight:400;font-family:'Liberation Sans', sans-serif;transform:scaleX(1.0312);transform-origin:0 0;-webkit-text-stroke:0.35px #202020;">Calculate</div>
<div style="left:3488.0px;top:400.0px;width:149.0px;height:47.0px;background:linear-gradient(#F4F2E8,#E8E5D6);border-style:solid;border-width:2px 4px 4px 2px;border-color:#F8F8F4 #8A8A80 #8A8A80 #F8F8F4;box-sizing:border-box;"></div>
<div class="t" style="left:3535.0px;top:409.8px;font-size:25.00px;color:#202020;font-weight:400;font-family:'Liberation Sans', sans-serif;transform:scaleX(0.9888);transform-origin:0 0;-webkit-text-stroke:0.35px #202020;">Load</div>
<div style="left:3668.0px;top:400.0px;width:149.0px;height:47.0px;background:linear-gradient(#F4F2E8,#E8E5D6);border-style:solid;border-width:2px 4px 4px 2px;border-color:#F8F8F4 #8A8A80 #8A8A80 #F8F8F4;box-sizing:border-box;"></div>
<div class="t" style="left:3715.0px;top:409.8px;font-size:25.00px;color:#202020;font-weight:400;font-family:'Liberation Sans', sans-serif;transform:scaleX(0.9825);transform-origin:0 0;-webkit-text-stroke:0.35px #202020;">Save</div>
<div class="t" style="left:2111.7px;top:469.1px;font-size:27.00px;color:#101010;font-weight:700;font-family:'Liberation Sans', sans-serif;transform:scaleX(0.9798);transform-origin:0 0;-webkit-text-stroke:0.35px #101010;">From:</div>
<div class="t" style="left:2411.0px;top:469.1px;font-size:27.00px;color:#101010;font-weight:700;font-family:'Liberation Sans', sans-serif;-webkit-text-stroke:0.35px #101010;">To:</div>
<div class="t" style="left:2700.7px;top:468.4px;font-size:27.00px;color:#101010;font-weight:700;font-family:'Liberation Sans', sans-serif;transform:scaleX(0.9510);transform-origin:0 0;-webkit-text-stroke:0.35px #101010;">Time step:</div>
<div class="t" style="left:2116.0px;top:545.0px;font-size:24.00px;color:#A8A898;font-weight:400;font-family:'Liberation Sans', sans-serif;transform:scaleX(1.2763);transform-origin:0 0;-webkit-text-stroke:0.35px #A8A898;">0</div>
<div class="t" style="left:2381.0px;top:542.0px;font-size:24.00px;color:#303030;font-weight:700;font-family:'Liberation Sans', sans-serif;-webkit-text-stroke:0.35px #303030;">-&gt;</div>
<div class="t" style="left:2445.8px;top:545.0px;font-size:24.00px;color:#A8A898;font-weight:400;font-family:'Liberation Sans', sans-serif;transform:scaleX(1.3505);transform-origin:0 0;-webkit-text-stroke:0.35px #A8A898;">6.2457e-06</div>
<div style="left:2702.0px;top:536.0px;width:337.0px;height:37.0px;background:#FAFAFA;border-style:solid;border-width:3px;border-color:#7C7C74 #F4F4EE #F4F4EE #7C7C74;box-sizing:border-box;"></div>
<div class="t" style="left:2709.0px;top:541.3px;font-size:24.00px;color:#303040;font-weight:400;font-family:'Liberation Sans', sans-serif;-webkit-text-stroke:0.35px #303040;">1.2491e-07</div>
<div style="left:3057.0px;top:534.0px;width:168.0px;height:45.0px;background:linear-gradient(#F4F2E8,#E8E5D6);border-style:solid;border-width:2px 4px 4px 2px;border-color:#F8F8F4 #8A8A80 #8A8A80 #F8F8F4;box-sizing:border-box;"></div>
<div class="t" style="left:3095.5px;top:541.1px;font-size:25.00px;color:#202020;font-weight:400;font-family:'Liberation Sans', sans-serif;transform:scaleX(0.9933);transform-origin:0 0;-webkit-text-stroke:0.35px #202020;">Remove</div>
<div class="t" style="left:2116.0px;top:606.3px;font-size:24.00px;color:#A8A898;font-weight:400;font-family:'Liberation Sans', sans-serif;transform:scaleX(1.3628);transform-origin:0 0;-webkit-text-stroke:0.35px #A8A898;">6.2457e-06</div>
<div class="t" style="left:2381.0px;top:603.3px;font-size:24.00px;color:#303030;font-weight:700;font-family:'Liberation Sans', sans-serif;-webkit-text-stroke:0.35px #303030;">-&gt;</div>
<div class="t" style="left:2445.8px;top:606.3px;font-size:24.00px;color:#A8A898;font-weight:400;font-family:'Liberation Sans', sans-serif;transform:scaleX(1.3505);transform-origin:0 0;-webkit-text-stroke:0.35px #A8A898;">1.0648e-05</div>
<div style="left:2702.0px;top:597.3px;width:337.0px;height:37.0px;background:#FAFAFA;border-style:solid;border-width:3px;border-color:#7C7C74 #F4F4EE #F4F4EE #7C7C74;box-sizing:border-box;"></div>
<div class="t" style="left:2709.0px;top:602.6px;font-size:24.00px;color:#303040;font-weight:400;font-family:'Liberation Sans', sans-serif;-webkit-text-stroke:0.35px #303040;">8.8055e-08</div>
<div style="left:3057.0px;top:595.3px;width:168.0px;height:45.0px;background:linear-gradient(#F4F2E8,#E8E5D6);border-style:solid;border-width:2px 4px 4px 2px;border-color:#F8F8F4 #8A8A80 #8A8A80 #F8F8F4;box-sizing:border-box;"></div>
<div class="t" style="left:3095.5px;top:602.4px;font-size:25.00px;color:#202020;font-weight:400;font-family:'Liberation Sans', sans-serif;transform:scaleX(0.9933);transform-origin:0 0;-webkit-text-stroke:0.35px #202020;">Remove</div>
<div class="t" style="left:2116.0px;top:667.8px;font-size:24.00px;color:#A8A898;font-weight:400;font-family:'Liberation Sans', sans-serif;transform:scaleX(1.3628);transform-origin:0 0;-webkit-text-stroke:0.35px #A8A898;">1.0648e-05</div>
<div class="t" style="left:2381.0px;top:664.8px;font-size:24.00px;color:#303030;font-weight:700;font-family:'Liberation Sans', sans-serif;-webkit-text-stroke:0.35px #303030;">-&gt;</div>
<div class="t" style="left:2445.8px;top:667.8px;font-size:24.00px;color:#A8A898;font-weight:400;font-family:'Liberation Sans', sans-serif;transform:scaleX(1.3505);transform-origin:0 0;-webkit-text-stroke:0.35px #A8A898;">1.5307e-05</div>
<div style="left:2702.0px;top:658.6px;width:337.0px;height:37.0px;background:#FAFAFA;border-style:solid;border-width:3px;border-color:#7C7C74 #F4F4EE #F4F4EE #7C7C74;box-sizing:border-box;"></div>
<div class="t" style="left:2709.0px;top:663.9px;font-size:24.00px;color:#303040;font-weight:400;font-family:'Liberation Sans', sans-serif;-webkit-text-stroke:0.35px #303040;">9.3174e-08</div>
<div style="left:3057.0px;top:656.6px;width:168.0px;height:45.0px;background:linear-gradient(#F4F2E8,#E8E5D6);border-style:solid;border-width:2px 4px 4px 2px;border-color:#F8F8F4 #8A8A80 #8A8A80 #F8F8F4;box-sizing:border-box;"></div>
<div class="t" style="left:3095.5px;top:663.9px;font-size:25.00px;color:#202020;font-weight:400;font-family:'Liberation Sans', sans-serif;transform:scaleX(0.9933);transform-origin:0 0;-webkit-text-stroke:0.35px #202020;">Remove</div>
<div class="t" style="left:2116.0px;top:728.8px;font-size:24.00px;color:#A8A898;font-weight:400;font-family:'Liberation Sans', sans-serif;transform:scaleX(1.3628);transform-origin:0 0;-webkit-text-stroke:0.35px #A8A898;">1.5307e-05</div>
<div class="t" style="left:2381.0px;top:725.8px;font-size:24.00px;color:#303030;font-weight:700;font-family:'Liberation Sans', sans-serif;-webkit-text-stroke:0.35px #303030;">-&gt;</div>
<div class="t" style="left:2445.8px;top:728.8px;font-size:24.00px;color:#A8A898;font-weight:400;font-family:'Liberation Sans', sans-serif;transform:scaleX(1.3505);transform-origin:0 0;-webkit-text-stroke:0.35px #A8A898;">2.1092e-05</div>
<div style="left:2702.0px;top:719.9px;width:337.0px;height:37.0px;background:#FAFAFA;border-style:solid;border-width:3px;border-color:#7C7C74 #F4F4EE #F4F4EE #7C7C74;box-sizing:border-box;"></div>
<div class="t" style="left:2709.0px;top:725.2px;font-size:24.00px;color:#303040;font-weight:400;font-family:'Liberation Sans', sans-serif;-webkit-text-stroke:0.35px #303040;">1.157e-07</div>
<div style="left:3057.0px;top:717.9px;width:168.0px;height:45.0px;background:linear-gradient(#F4F2E8,#E8E5D6);border-style:solid;border-width:2px 4px 4px 2px;border-color:#F8F8F4 #8A8A80 #8A8A80 #F8F8F4;box-sizing:border-box;"></div>
<div class="t" style="left:3095.5px;top:724.9px;font-size:25.00px;color:#202020;font-weight:400;font-family:'Liberation Sans', sans-serif;transform:scaleX(0.9933);transform-origin:0 0;-webkit-text-stroke:0.35px #202020;">Remove</div>
<div class="t" style="left:3322.7px;top:497.4px;font-size:25.00px;color:#202020;font-weight:400;font-family:'Liberation Sans', sans-serif;transform:scaleX(0.9594);transform-origin:0 0;-webkit-text-stroke:0.35px #202020;">Steps:</div>
<div style="left:3318.0px;top:532.0px;width:149.0px;height:42.0px;background:#ECE9D8;border:3px solid #252525;box-sizing:border-box;"></div>
<div class="t" style="left:3322.7px;top:539.7px;font-size:24.00px;color:#202020;font-weight:400;font-family:'Liberation Sans', sans-serif;transform:scaleX(1.0479);transform-origin:0 0;-webkit-text-stroke:0.35px #202020;">202</div>
<div class="t" style="left:3322.7px;top:602.4px;font-size:25.00px;color:#202020;font-weight:400;font-family:'Liberation Sans', sans-serif;transform:scaleX(0.9736);transform-origin:0 0;-webkit-text-stroke:0.35px #202020;">Time:</div>
<div style="left:3318.0px;top:639.0px;width:149.0px;height:39.0px;background:#ECE9D8;border:3px solid #252525;box-sizing:border-box;"></div>
<div class="t" style="left:3322.7px;top:646.3px;font-size:24.00px;color:#202020;font-weight:400;font-family:'Liberation Sans', sans-serif;transform:scaleX(1.0375);transform-origin:0 0;-webkit-text-stroke:0.35px #202020;">2.0888e-05</div>
<div style="left:3490.0px;top:456.0px;width:323.0px;height:824.0px;background:#FAFAFA;border-style:solid;border-width:3px;border-color:#7C7C74 #F4F4EE #F4F4EE #7C7C74;box-sizing:border-box;"></div>
<div class="t" style="left:3497.5px;top:457.3px;font-size:24.00px;color:#303040;font-weight:400;font-family:'Liberation Sans', sans-serif;-webkit-text-stroke:0.35px #303040;">0</div>
<div class="t" style="left:3497.5px;top:483.7px;font-size:24.00px;color:#303040;font-weight:400;font-family:'Liberation Sans', sans-serif;transform:scaleX(1.0128);transform-origin:0 0;-webkit-text-stroke:0.35px #303040;">1.2491e-07</div>
<div class="t" style="left:3497.5px;top:510.2px;font-size:24.00px;color:#303040;font-weight:400;font-family:'Liberation Sans', sans-serif;transform:scaleX(1.0128);transform-origin:0 0;-webkit-text-stroke:0.35px #303040;">2.4983e-07</div>
<div class="t" style="left:3497.5px;top:536.6px;font-size:24.00px;color:#303040;font-weight:400;font-family:'Liberation Sans', sans-serif;transform:scaleX(1.0128);transform-origin:0 0;-webkit-text-stroke:0.35px #303040;">3.7474e-07</div>
<div class="t" style="left:3497.5px;top:563.1px;font-size:24.00px;color:#303040;font-weight:400;font-family:'Liberation Sans', sans-serif;transform:scaleX(1.0128);transform-origin:0 0;-webkit-text-stroke:0.35px #303040;">4.9966e-07</div>
<div class="t" style="left:3497.5px;top:589.5px;font-size:24.00px;color:#303040;font-weight:400;font-family:'Liberation Sans', sans-serif;transform:scaleX(1.0128);transform-origin:0 0;-webkit-text-stroke:0.35px #303040;">6.2457e-07</div>
<div class="t" style="left:3497.5px;top:616.0px;font-size:24.00px;color:#303040;font-weight:400;font-family:'Liberation Sans', sans-serif;transform:scaleX(1.0128);transform-origin:0 0;-webkit-text-stroke:0.35px #303040;">7.4949e-07</div>
<div class="t" style="left:3497.5px;top:642.4px;font-size:24.00px;color:#303040;font-weight:400;font-family:'Liberation Sans', sans-serif;-webkit-text-stroke:0.35px #303040;">8.744e-07</div>
<div class="t" style="left:3497.5px;top:668.9px;font-size:24.00px;color:#303040;font-weight:400;font-family:'Liberation Sans', sans-serif;transform:scaleX(1.0128);transform-origin:0 0;-webkit-text-stroke:0.35px #303040;">9.9932e-07</div>
<div class="t" style="left:3497.5px;top:695.3px;font-size:24.00px;color:#303040;font-weight:400;font-family:'Liberation Sans', sans-serif;transform:scaleX(1.0128);transform-origin:0 0;-webkit-text-stroke:0.35px #303040;">1.1242e-06</div>
<div class="t" style="left:3497.5px;top:721.8px;font-size:24.00px;color:#303040;font-weight:400;font-family:'Liberation Sans', sans-serif;transform:scaleX(1.0128);transform-origin:0 0;-webkit-text-stroke:0.35px #303040;">1.2491e-06</div>
<div class="t" style="left:3497.5px;top:748.2px;font-size:24.00px;color:#303040;font-weight:400;font-family:'Liberation Sans', sans-serif;transform:scaleX(1.0128);transform-origin:0 0;-webkit-text-stroke:0.35px #303040;">1.3741e-06</div>
<div class="t" style="left:3497.5px;top:774.7px;font-size:24.00px;color:#303040;font-weight:400;font-family:'Liberation Sans', sans-serif;-webkit-text-stroke:0.35px #303040;">1.499e-06</div>
<div class="t" style="left:3497.5px;top:801.1px;font-size:24.00px;color:#303040;font-weight:400;font-family:'Liberation Sans', sans-serif;transform:scaleX(1.0128);transform-origin:0 0;-webkit-text-stroke:0.35px #303040;">1.6239e-06</div>
<div class="t" style="left:3497.5px;top:827.6px;font-size:24.00px;color:#303040;font-weight:400;font-family:'Liberation Sans', sans-serif;transform:scaleX(1.0128);transform-origin:0 0;-webkit-text-stroke:0.35px #303040;">1.7488e-06</div>
<div class="t" style="left:3497.5px;top:854.0px;font-size:24.00px;color:#303040;font-weight:400;font-family:'Liberation Sans', sans-serif;transform:scaleX(1.0128);transform-origin:0 0;-webkit-text-stroke:0.35px #303040;">1.8737e-06</div>
<div class="t" style="left:3497.5px;top:880.5px;font-size:24.00px;color:#303040;font-weight:400;font-family:'Liberation Sans', sans-serif;transform:scaleX(1.0128);transform-origin:0 0;-webkit-text-stroke:0.35px #303040;">1.9986e-06</div>
<div class="t" style="left:3497.5px;top:906.9px;font-size:24.00px;color:#303040;font-weight:400;font-family:'Liberation Sans', sans-serif;transform:scaleX(1.0128);transform-origin:0 0;-webkit-text-stroke:0.35px #303040;">2.1235e-06</div>
<div class="t" style="left:3497.5px;top:933.4px;font-size:24.00px;color:#303040;font-weight:400;font-family:'Liberation Sans', sans-serif;transform:scaleX(1.0128);transform-origin:0 0;-webkit-text-stroke:0.35px #303040;">2.2485e-06</div>
<div class="t" style="left:3497.5px;top:959.8px;font-size:24.00px;color:#303040;font-weight:400;font-family:'Liberation Sans', sans-serif;transform:scaleX(1.0128);transform-origin:0 0;-webkit-text-stroke:0.35px #303040;">2.3734e-06</div>
<div class="t" style="left:3497.5px;top:986.3px;font-size:24.00px;color:#303040;font-weight:400;font-family:'Liberation Sans', sans-serif;transform:scaleX(1.0128);transform-origin:0 0;-webkit-text-stroke:0.35px #303040;">2.4983e-06</div>
<div class="t" style="left:3497.5px;top:1012.7px;font-size:24.00px;color:#303040;font-weight:400;font-family:'Liberation Sans', sans-serif;transform:scaleX(1.0128);transform-origin:0 0;-webkit-text-stroke:0.35px #303040;">2.6232e-06</div>
<div class="t" style="left:3497.5px;top:1039.2px;font-size:24.00px;color:#303040;font-weight:400;font-family:'Liberation Sans', sans-serif;transform:scaleX(1.0128);transform-origin:0 0;-webkit-text-stroke:0.35px #303040;">2.7481e-06</div>
<div class="t" style="left:3497.5px;top:1065.6px;font-size:24.00px;color:#303040;font-weight:400;font-family:'Liberation Sans', sans-serif;-webkit-text-stroke:0.35px #303040;">2.873e-06</div>
<div class="t" style="left:3497.5px;top:1092.1px;font-size:24.00px;color:#303040;font-weight:400;font-family:'Liberation Sans', sans-serif;-webkit-text-stroke:0.35px #303040;">2.998e-06</div>
<div class="t" style="left:3497.5px;top:1118.5px;font-size:24.00px;color:#303040;font-weight:400;font-family:'Liberation Sans', sans-serif;transform:scaleX(1.0128);transform-origin:0 0;-webkit-text-stroke:0.35px #303040;">3.1229e-06</div>
<div class="t" style="left:3497.5px;top:1145.0px;font-size:24.00px;color:#303040;font-weight:400;font-family:'Liberation Sans', sans-serif;transform:scaleX(1.0128);transform-origin:0 0;-webkit-text-stroke:0.35px #303040;">3.2478e-06</div>
<div class="t" style="left:3497.5px;top:1171.4px;font-size:24.00px;color:#303040;font-weight:400;font-family:'Liberation Sans', sans-serif;transform:scaleX(1.0128);transform-origin:0 0;-webkit-text-stroke:0.35px #303040;">3.3727e-06</div>
<div class="t" style="left:3497.5px;top:1197.9px;font-size:24.00px;color:#303040;font-weight:400;font-family:'Liberation Sans', sans-serif;transform:scaleX(1.0128);transform-origin:0 0;-webkit-text-stroke:0.35px #303040;">3.4976e-06</div>
<div class="t" style="left:3497.5px;top:1224.3px;font-size:24.00px;color:#303040;font-weight:400;font-family:'Liberation Sans', sans-serif;transform:scaleX(1.0128);transform-origin:0 0;-webkit-text-stroke:0.35px #303040;">3.6225e-06</div>
<div class="t" style="left:3497.5px;top:1250.8px;font-size:24.00px;color:#303040;font-weight:400;font-family:'Liberation Sans', sans-serif;transform:scaleX(1.0128);transform-origin:0 0;-webkit-text-stroke:0.35px #303040;">3.7474e-06</div>
<div style="left:3777.0px;top:459.0px;width:34.0px;height:818.0px;background:#F4F3EC;"></div>
<div style="left:3778.0px;top:460.0px;width:33.0px;height:32.0px;background:linear-gradient(90deg,#D8E4FA,#C0D2F6);border:2px solid #B8CCF0;border-radius:4px;box-sizing:border-box;"></div>
<svg style="left:3778px;top:460px" width="33" height="32"><path d="M9.9 19.84 L16.5 12.16 L23.099999999999998 19.84" stroke="#1A3E8A" stroke-width="3.3" fill="none"/></svg>
<div style="left:3778.0px;top:494.0px;width:33.0px;height:113.0px;background:#C8D8F8;border:2px solid #B0C4EE;border-radius:4px;box-sizing:border-box;"></div>
<div style="left:3778.0px;top:1245.0px;width:33.0px;height:32.0px;background:linear-gradient(90deg,#D8E4FA,#C0D2F6);border:2px solid #B8CCF0;border-radius:4px;box-sizing:border-box;"></div>
<svg style="left:3778px;top:1245px" width="33" height="32"><path d="M9.9 12.16 L16.5 19.84 L23.099999999999998 12.16" stroke="#1A3E8A" stroke-width="3.3" fill="none"/></svg>
<div style="left:3488.0px;top:1296.0px;width:150.0px;height:46.0px;background:linear-gradient(#F4F2E8,#E8E5D6);border-style:solid;border-width:2px 4px 4px 2px;border-color:#F8F8F4 #8A8A80 #8A8A80 #F8F8F4;box-sizing:border-box;"></div>
<div class="t" style="left:3522.0px;top:1306.1px;font-size:25.00px;color:#202020;font-weight:400;font-family:'Liberation Sans', sans-serif;-webkit-text-stroke:0.35px #202020;">Cancel</div>
<div style="left:3667.0px;top:1296.0px;width:150.0px;height:46.0px;background:linear-gradient(#F4F2E8,#E8E5D6);border-style:solid;border-width:2px 4px 4px 2px;border-color:#F8F8F4 #8A8A80 #8A8A80 #F8F8F4;box-sizing:border-box;"></div>
<div class="t" style="left:3718.0px;top:1306.1px;font-size:25.00px;color:#202020;font-weight:400;font-family:'Liberation Sans', sans-serif;transform:scaleX(0.9732);transform-origin:0 0;-webkit-text-stroke:0.35px #202020;">Help</div>
<div style="left:3488.0px;top:1353.0px;width:329.0px;height:47.0px;background:linear-gradient(#F4F2E8,#E8E5D6);border-style:solid;border-width:2px 4px 4px 2px;border-color:#F8F8F4 #8A8A80 #8A8A80 #F8F8F4;box-sizing:border-box;"></div>
<div class="t" style="left:3579.7px;top:1362.8px;font-size:25.00px;color:#202020;font-weight:400;font-family:'Liberation Sans', sans-serif;-webkit-text-stroke:0.35px #202020;">Run transient</div>
<svg style="left:3815px;top:1392px" width="30" height="28"><path d="M28 6 L6 28 M28 14 L14 28 M28 22 L22 28" stroke="#B0AC98" stroke-width="2.5"/></svg>
<div class="t" style="left:2361.0px;top:1449.4px;font-size:68.00px;color:#000;font-weight:400;font-family:'Liberation Serif', serif;transform:scaleX(0.9779);transform-origin:0 0;-webkit-text-stroke:0.3px #000;">(b) transient pulses under different time windows</div>
<div style="left:170.0px;top:1639.0px;width:1758.0px;height:1407.0px;background:#0848F0;"></div>
<div style="left:170.0px;top:1639.0px;width:1758.0px;height:60.0px;background:linear-gradient(#5AA0F0 0%,#2060F8 3%,#3A88F0 7%,#1C5CF4 14%,#0846F8 28%,#0644F8 50%,#0E4EF8 62%,#1A5CF4 74%,#1652F4 84%,#0032E8 93%,#2A62F0 100%);"></div>
<div style="left:177.0px;top:1699.0px;width:1744.0px;height:1340.0px;background:#ECE9D8;"></div>
<div style="left:177.0px;top:1699.0px;width:2.0px;height:1340.0px;background:#A8CCF4;"></div>
<div style="left:1876.0px;top:1644.0px;width:42.0px;height:46.0px;background:linear-gradient(135deg,#F08A70,#E0401F 45%,#C8300F);border:2px solid #F4F0F0;border-radius:5px;box-sizing:border-box;"></div>
<svg style="left:1876px;top:1644px" width="42" height="46"><path d="M11.34 11.5 L30.66 34.5 M30.66 11.5 L11.34 34.5" stroke="#fff" stroke-width="4.6" stroke-linecap="square"/></svg>
<svg style="left:179px;top:1647px" width="35.3" height="36.8" viewBox="0 0 46 48"><rect x="0" y="0" width="44" height="37" fill="#9ED0E8"/><rect x="2" y="2" width="40" height="33" fill="#C8F2EE"/><rect x="6" y="5" width="36" height="30" fill="#8EBAC4"/><rect x="11" y="37" width="23" height="10" fill="#E4F2EE" stroke="#9ED0E8" stroke-width="1.5"/><path d="M16 13 L9 20 L20 30 L31 26 L25 9 Z" stroke="#C8E0E8" stroke-width="2" fill="none"/><circle cx="16" cy="13" r="3.2" fill="#101830"/><circle cx="9" cy="20" r="2.8" fill="#404860"/><circle cx="20" cy="30" r="3.4" fill="#101020"/><circle cx="31" cy="26" r="3.6" fill="#0A1850"/><circle cx="25" cy="9" r="2.4" fill="#405070"/></svg>
<div class="t" style="left:222.6px;top:1651.5px;font-size:31.50px;color:#fff;font-weight:400;font-family:'Liberation Sans', sans-serif;transform:scaleX(0.8962);transform-origin:0 0;text-shadow:1px 1px 1px #0A2A80;-webkit-text-stroke:0.6px #fff;">LAD v4.0: Calculate modes</div>
<div class="t" style="left:232.0px;top:1752.8px;font-size:29.00px;color:#101010;font-weight:400;font-family:'Liberation Sans', sans-serif;transform:scaleX(0.7970);transform-origin:0 0;-webkit-text-stroke:0.35px #101010;">Number of radial points</div>
<div style="left:485.0px;top:1750.0px;width:64.0px;height:41.0px;background:#fff;border-style:solid;border-width:3px;border-color:#8C8C84 #F4F4EE #F4F4EE #8C8C84;box-sizing:border-box;"></div>
<div class="t" style="left:492.0px;top:1752.8px;font-size:29.00px;color:#101010;font-weight:400;font-family:'Liberation Sans', sans-serif;transform:scaleX(0.7456);transform-origin:0 0;-webkit-text-stroke:0.35px #101010;">21</div>
<svg style="left:233px;top:1822.5px" width="26" height="26"><circle cx="13" cy="13" r="11" fill="#fff" stroke="#A8A8A0" stroke-width="2"/></svg>
<div class="t" style="left:269.4px;top:1818.6px;font-size:29.00px;color:#101010;font-weight:400;font-family:'Liberation Sans', sans-serif;transform:scaleX(0.7889);transform-origin:0 0;-webkit-text-stroke:0.35px #101010;">Multimode, non-step index model</div>
<svg style="left:233px;top:1877.7px" width="26" height="26"><circle cx="13" cy="13" r="11" fill="#fff" stroke="#A8A8A0" stroke-width="2"/><circle cx="13" cy="13" r="3.52" fill="#000"/></svg>
<div class="t" style="left:269.4px;top:1873.8px;font-size:29.00px;color:#101010;font-weight:400;font-family:'Liberation Sans', sans-serif;transform:scaleX(0.7975);transform-origin:0 0;-webkit-text-stroke:0.35px #101010;">Bent fiber, step index</div>
<div class="t" style="left:232.0px;top:1938.1px;font-size:29.00px;color:#101010;font-weight:400;font-family:'Liberation Sans', sans-serif;transform:scaleX(0.7827);transform-origin:0 0;-webkit-text-stroke:0.35px #101010;">Start wavelength (nm)</div>
<div style="left:485.0px;top:1934.0px;width:111.0px;height:42.0px;background:#fff;border-style:solid;border-width:3px;border-color:#8C8C84 #F4F4EE #F4F4EE #8C8C84;box-sizing:border-box;"></div>
<div class="t" style="left:490.5px;top:1938.1px;font-size:29.00px;color:#101010;font-weight:400;font-family:'Liberation Sans', sans-serif;transform:scaleX(0.7433);transform-origin:0 0;-webkit-text-stroke:0.35px #101010;">900</div>
<div class="t" style="left:605.0px;top:1938.1px;font-size:29.00px;color:#101010;font-weight:700;font-family:'Liberation Sans', sans-serif;transform:scaleX(0.7931);transform-origin:0 0;-webkit-text-stroke:0.35px #101010;">nm</div>
<div class="t" style="left:232.0px;top:1997.5px;font-size:29.00px;color:#101010;font-weight:400;font-family:'Liberation Sans', sans-serif;transform:scaleX(0.7801);transform-origin:0 0;-webkit-text-stroke:0.35px #101010;">Stop wavelength (nm)</div>
<div style="left:485.0px;top:1993.0px;width:111.0px;height:42.0px;background:#fff;border-style:solid;border-width:3px;border-color:#8C8C84 #F4F4EE #F4F4EE #8C8C84;box-sizing:border-box;"></div>
<div class="t" style="left:490.5px;top:1997.5px;font-size:29.00px;color:#101010;font-weight:400;font-family:'Liberation Sans', sans-serif;transform:scaleX(0.7378);transform-origin:0 0;-webkit-text-stroke:0.35px #101010;">1100</div>
<div class="t" style="left:605.0px;top:1997.5px;font-size:29.00px;color:#101010;font-weight:700;font-family:'Liberation Sans', sans-serif;transform:scaleX(0.7931);transform-origin:0 0;-webkit-text-stroke:0.35px #101010;">nm</div>
<div class="t" style="left:232.0px;top:2057.5px;font-size:29.00px;color:#101010;font-weight:400;font-family:'Liberation Sans', sans-serif;transform:scaleX(0.7878);transform-origin:0 0;-webkit-text-stroke:0.35px #101010;">Number of wavelengths</div>
<div style="left:485.0px;top:2052.0px;width:111.0px;height:42.0px;background:#fff;border-style:solid;border-width:3px;border-color:#8C8C84 #F4F4EE #F4F4EE #8C8C84;box-sizing:border-box;"></div>
<div class="t" style="left:490.5px;top:2057.5px;font-size:29.00px;color:#101010;font-weight:400;font-family:'Liberation Sans', sans-serif;transform:scaleX(0.7456);transform-origin:0 0;-webkit-text-stroke:0.35px #101010;">21</div>
<div class="t" style="left:605.0px;top:2057.5px;font-size:29.00px;color:#101010;font-weight:700;font-family:'Liberation Sans', sans-serif;transform:scaleX(0.7931);transform-origin:0 0;-webkit-text-stroke:0.35px #101010;">nm</div>
<div style="left:333.0px;top:2141.0px;width:232.0px;height:53.0px;background:#ECE9D8;border:2px solid #202020;box-sizing:border-box;"></div>
<svg style="left:343px;top:2147px" width="36" height="42"><circle cx="17" cy="16" r="10" fill="none" stroke="#6A6A9A" stroke-width="2.5"/><path d="M3 34 L12 24" stroke="#C04060" stroke-width="2"/><path d="M22 25 L28 38" stroke="#4A7AC0" stroke-width="3"/></svg>
<div class="t" style="left:378.0px;top:2151.2px;font-size:29.00px;color:#101010;font-weight:400;font-family:'Liberation Sans', sans-serif;transform:scaleX(0.7915);transform-origin:0 0;-webkit-text-stroke:0.35px #101010;">Calculate modes</div>
<div class="t" style="left:359.0px;top:2244.8px;font-size:29.00px;color:#101010;font-weight:700;font-family:'Liberation Sans', sans-serif;transform:scaleX(0.8077);transform-origin:0 0;-webkit-text-stroke:0.35px #101010;">Cutoff wl (nm)</div>
<div style="left:241.6px;top:2294.5px;width:389.9px;height:601.1px;background:#fff;border-style:solid;border-width:3px;border-color:#7C7C74 #F4F4EE #F4F4EE #7C7C74;box-sizing:border-box;"></div>
<div class="t" style="left:267.0px;top:2296.8px;font-size:29.00px;color:#101010;font-weight:400;font-family:'Liberation Sans', sans-serif;transform:scaleX(0.7611);transform-origin:0 0;-webkit-text-stroke:0.35px #101010;">LP01 -</div>
<div class="t" style="left:267.0px;top:2326.5px;font-size:29.00px;color:#101010;font-weight:400;font-family:'Liberation Sans', sans-serif;transform:scaleX(0.7737);transform-origin:0 0;-webkit-text-stroke:0.35px #101010;">LP11 &gt; 1100 nm</div>
<div class="t" style="left:267.0px;top:2356.3px;font-size:29.00px;color:#101010;font-weight:400;font-family:'Liberation Sans', sans-serif;transform:scaleX(0.7599);transform-origin:0 0;-webkit-text-stroke:0.35px #101010;">LP21 1080 - 1090 nm</div>
<div class="t" style="left:267.0px;top:2386.1px;font-size:29.00px;color:#101010;font-weight:400;font-family:'Liberation Sans', sans-serif;transform:scaleX(0.7595);transform-origin:0 0;-webkit-text-stroke:0.35px #101010;">LP02 &lt; 900 nm</div>
<div class="t" style="left:267.0px;top:2415.8px;font-size:29.00px;color:#101010;font-weight:400;font-family:'Liberation Sans', sans-serif;transform:scaleX(0.7595);transform-origin:0 0;-webkit-text-stroke:0.35px #101010;">LP31 &lt; 900 nm</div>
<div class="t" style="left:267.0px;top:2445.6px;font-size:29.00px;color:#101010;font-weight:400;font-family:'Liberation Sans', sans-serif;transform:scaleX(0.7595);transform-origin:0 0;-webkit-text-stroke:0.35px #101010;">LP12 &lt; 900 nm</div>
<div class="t" style="left:267.0px;top:2475.4px;font-size:29.00px;color:#101010;font-weight:400;font-family:'Liberation Sans', sans-serif;transform:scaleX(0.7595);transform-origin:0 0;-webkit-text-stroke:0.35px #101010;">LP41 &lt; 900 nm</div>
<div class="t" style="left:267.0px;top:2505.1px;font-size:29.00px;color:#101010;font-weight:400;font-family:'Liberation Sans', sans-serif;transform:scaleX(0.7595);transform-origin:0 0;-webkit-text-stroke:0.35px #101010;">LP22 &lt; 900 nm</div>
<div class="t" style="left:795.4px;top:1738.8px;font-size:29.00px;color:#101010;font-weight:700;font-family:'Liberation Sans', sans-serif;transform:scaleX(0.8154);transform-origin:0 0;-webkit-text-stroke:0.35px #101010;">Number of modes</div>
<div style="left:699.0px;top:1789.5px;width:392.0px;height:1106.1px;background:#fff;border-style:solid;border-width:3px;border-color:#7C7C74 #F4F4EE #F4F4EE #7C7C74;box-sizing:border-box;"></div>
<div style="left:702.0px;top:2329.6px;width:386.0px;height:26.7px;background:#2262DC;border:1px dotted #0A2060;box-sizing:border-box;"></div>
<div class="t" style="left:723.8px;top:1790.5px;font-size:29.00px;color:#101010;font-weight:400;font-family:'Liberation Sans', sans-serif;transform:scaleX(0.7379);transform-origin:0 0;-webkit-text-stroke:0.35px #101010;">900nm -&gt; 4 modes</div>
<div class="t" style="left:723.8px;top:1820.2px;font-size:29.00px;color:#101010;font-weight:400;font-family:'Liberation Sans', sans-serif;transform:scaleX(0.7379);transform-origin:0 0;-webkit-text-stroke:0.35px #101010;">910nm -&gt; 4 modes</div>
<div class="t" style="left:723.8px;top:1849.9px;font-size:29.00px;color:#101010;font-weight:400;font-family:'Liberation Sans', sans-serif;transform:scaleX(0.7379);transform-origin:0 0;-webkit-text-stroke:0.35px #101010;">920nm -&gt; 4 modes</div>
<div class="t" style="left:723.8px;top:1879.7px;font-size:29.00px;color:#101010;font-weight:400;font-family:'Liberation Sans', sans-serif;transform:scaleX(0.7379);transform-origin:0 0;-webkit-text-stroke:0.35px #101010;">930nm -&gt; 4 modes</div>
<div class="t" style="left:723.8px;top:1909.4px;font-size:29.00px;color:#101010;font-weight:400;font-family:'Liberation Sans', sans-serif;transform:scaleX(0.7379);transform-origin:0 0;-webkit-text-stroke:0.35px #101010;">940nm -&gt; 4 modes</div>
<div class="t" style="left:723.8px;top:1939.2px;font-size:29.00px;color:#101010;font-weight:400;font-family:'Liberation Sans', sans-serif;transform:scaleX(0.7379);transform-origin:0 0;-webkit-text-stroke:0.35px #101010;">950nm -&gt; 4 modes</div>
<div class="t" style="left:723.8px;top:1968.9px;font-size:29.00px;color:#101010;font-weight:400;font-family:'Liberation Sans', sans-serif;transform:scaleX(0.7379);transform-origin:0 0;-webkit-text-stroke:0.35px #101010;">960nm -&gt; 4 modes</div>
<div class="t" style="left:723.8px;top:1998.6px;font-size:29.00px;color:#101010;font-weight:400;font-family:'Liberation Sans', sans-serif;transform:scaleX(0.7379);transform-origin:0 0;-webkit-text-stroke:0.35px #101010;">970nm -&gt; 4 modes</div>
<div class="t" style="left:723.8px;top:2028.4px;font-size:29.00px;color:#101010;font-weight:400;font-family:'Liberation Sans', sans-serif;transform:scaleX(0.7379);transform-origin:0 0;-webkit-text-stroke:0.35px #101010;">980nm -&gt; 4 modes</div>
<div class="t" style="left:723.8px;top:2058.1px;font-size:29.00px;color:#101010;font-weight:400;font-family:'Liberation Sans', sans-serif;transform:scaleX(0.7379);transform-origin:0 0;-webkit-text-stroke:0.35px #101010;">990nm -&gt; 4 modes</div>
<div class="t" style="left:723.8px;top:2087.9px;font-size:29.00px;color:#101010;font-weight:400;font-family:'Liberation Sans', sans-serif;transform:scaleX(0.7422);transform-origin:0 0;-webkit-text-stroke:0.35px #101010;">1000nm -&gt; 4 modes</div>
<div class="t" style="left:723.8px;top:2117.6px;font-size:29.00px;color:#101010;font-weight:400;font-family:'Liberation Sans', sans-serif;transform:scaleX(0.7422);transform-origin:0 0;-webkit-text-stroke:0.35px #101010;">1010nm -&gt; 3 modes</div>
<div class="t" style="left:723.8px;top:2147.3px;font-size:29.00px;color:#101010;font-weight:400;font-family:'Liberation Sans', sans-serif;transform:scaleX(0.7422);transform-origin:0 0;-webkit-text-stroke:0.35px #101010;">1020nm -&gt; 3 modes</div>
<div class="t" style="left:723.8px;top:2177.1px;font-size:29.00px;color:#101010;font-weight:400;font-family:'Liberation Sans', sans-serif;transform:scaleX(0.7422);transform-origin:0 0;-webkit-text-stroke:0.35px #101010;">1030nm -&gt; 3 modes</div>
<div class="t" style="left:723.8px;top:2206.8px;font-size:29.00px;color:#101010;font-weight:400;font-family:'Liberation Sans', sans-serif;transform:scaleX(0.7422);transform-origin:0 0;-webkit-text-stroke:0.35px #101010;">1040nm -&gt; 3 modes</div>
<div class="t" style="left:723.8px;top:2236.6px;font-size:29.00px;color:#101010;font-weight:400;font-family:'Liberation Sans', sans-serif;transform:scaleX(0.7422);transform-origin:0 0;-webkit-text-stroke:0.35px #101010;">1050nm -&gt; 3 modes</div>
<div class="t" style="left:723.8px;top:2266.3px;font-size:29.00px;color:#101010;font-weight:400;font-family:'Liberation Sans', sans-serif;transform:scaleX(0.7422);transform-origin:0 0;-webkit-text-stroke:0.35px #101010;">1060nm -&gt; 3 modes</div>
<div class="t" style="left:723.8px;top:2296.0px;font-size:29.00px;color:#101010;font-weight:400;font-family:'Liberation Sans', sans-serif;transform:scaleX(0.7422);transform-origin:0 0;-webkit-text-stroke:0.35px #101010;">1070nm -&gt; 3 modes</div>
<div class="t" style="left:723.8px;top:2325.8px;font-size:29.00px;color:#fff;font-weight:400;font-family:'Liberation Sans', sans-serif;transform:scaleX(0.7422);transform-origin:0 0;-webkit-text-stroke:0.35px #fff;">1080nm -&gt; 3 modes</div>
<div class="t" style="left:723.8px;top:2355.5px;font-size:29.00px;color:#101010;font-weight:400;font-family:'Liberation Sans', sans-serif;transform:scaleX(0.7422);transform-origin:0 0;-webkit-text-stroke:0.35px #101010;">1090nm -&gt; 2 modes</div>
<div class="t" style="left:723.8px;top:2385.3px;font-size:29.00px;color:#101010;font-weight:400;font-family:'Liberation Sans', sans-serif;transform:scaleX(0.7481);transform-origin:0 0;-webkit-text-stroke:0.35px #101010;">1100nm -&gt; 2 modes</div>
<div class="t" style="left:1188.0px;top:1733.5px;font-size:37.00px;color:#1A4FE0;font-weight:700;font-family:'Liberation Sans', sans-serif;transform:scaleX(0.9368);transform-origin:0 0;-webkit-text-stroke:0.35px #1A4FE0;">Modes of YDFDC0 at 1080nm</div>
<div class="t" style="left:1203.7px;top:1798.8px;font-size:29.00px;color:#101010;font-weight:700;font-family:'Liberation Sans', sans-serif;transform:scaleX(0.8280);transform-origin:0 0;-webkit-text-stroke:0.35px #101010;">Modes</div>
<div class="t" style="left:1362.0px;top:1798.8px;font-size:29.00px;color:#101010;font-weight:700;font-family:'Liberation Sans', sans-serif;transform:scaleX(0.8123);transform-origin:0 0;-webkit-text-stroke:0.35px #101010;">Eff. index</div>
<div class="t" style="left:1539.0px;top:1798.8px;font-size:29.00px;color:#101010;font-weight:700;font-family:'Liberation Sans', sans-serif;transform:scaleX(0.8901);transform-origin:0 0;-webkit-text-stroke:0.35px #101010;">MFD (um)</div>
<div class="t" style="left:1700.7px;top:1798.8px;font-size:29.00px;color:#101010;font-weight:700;font-family:'Liberation Sans', sans-serif;transform:scaleX(0.8358);transform-origin:0 0;-webkit-text-stroke:0.35px #101010;">B. loss (dB/m)</div>
<div style="left:1156.6px;top:1851.5px;width:718.4px;height:956.5px;background:#fff;border-style:solid;border-width:4px 2px 2px 4px;border-color:#6C6C64 #F4F4EE #F4F4EE #6C6C64;box-sizing:border-box;"></div>
<div style="left:1324.0px;top:1851.5px;width:4.0px;height:956.5px;background:#6C6C64;"></div>
<div style="left:1502.0px;top:1851.5px;width:4.0px;height:956.5px;background:#6C6C64;"></div>
<div style="left:1688.0px;top:1851.5px;width:4.0px;height:956.5px;background:#6C6C64;"></div>
<div class="t" style="left:1182.0px;top:1852.8px;font-size:29.00px;color:#A4A49A;font-weight:400;font-family:'Liberation Sans', sans-serif;transform:scaleX(0.7384);transform-origin:0 0;-webkit-text-stroke:0.35px #A4A49A;">LP01</div>
<div class="t" style="left:1352.0px;top:1852.8px;font-size:29.00px;color:#A4A49A;font-weight:400;font-family:'Liberation Sans', sans-serif;transform:scaleX(0.7566);transform-origin:0 0;-webkit-text-stroke:0.35px #A4A49A;">1.458604</div>
<div class="t" style="left:1530.5px;top:1852.8px;font-size:29.00px;color:#A4A49A;font-weight:400;font-family:'Liberation Sans', sans-serif;transform:scaleX(0.7590);transform-origin:0 0;-webkit-text-stroke:0.35px #A4A49A;">16.541451</div>
<div class="t" style="left:1715.0px;top:1852.8px;font-size:29.00px;color:#A4A49A;font-weight:400;font-family:'Liberation Sans', sans-serif;transform:scaleX(0.7456);transform-origin:0 0;-webkit-text-stroke:0.35px #A4A49A;">0</div>
<div class="t" style="left:1182.0px;top:1882.6px;font-size:29.00px;color:#A4A49A;font-weight:400;font-family:'Liberation Sans', sans-serif;transform:scaleX(0.7629);transform-origin:0 0;-webkit-text-stroke:0.35px #A4A49A;">LP11</div>
<div class="t" style="left:1352.0px;top:1882.6px;font-size:29.00px;color:#A4A49A;font-weight:400;font-family:'Liberation Sans', sans-serif;transform:scaleX(0.7566);transform-origin:0 0;-webkit-text-stroke:0.35px #A4A49A;">1.458032</div>
<div class="t" style="left:1530.5px;top:1882.6px;font-size:29.00px;color:#A4A49A;font-weight:400;font-family:'Liberation Sans', sans-serif;transform:scaleX(0.7590);transform-origin:0 0;-webkit-text-stroke:0.35px #A4A49A;">13.863164</div>
<div class="t" style="left:1715.0px;top:1882.6px;font-size:29.00px;color:#A4A49A;font-weight:400;font-family:'Liberation Sans', sans-serif;transform:scaleX(0.7711);transform-origin:0 0;-webkit-text-stroke:0.35px #A4A49A;">10259.176215</div>
<div class="t" style="left:1182.0px;top:1912.4px;font-size:29.00px;color:#A4A49A;font-weight:400;font-family:'Liberation Sans', sans-serif;transform:scaleX(0.7384);transform-origin:0 0;-webkit-text-stroke:0.35px #A4A49A;">LP21</div>
<div class="t" style="left:1352.0px;top:1912.4px;font-size:29.00px;color:#A4A49A;font-weight:400;font-family:'Liberation Sans', sans-serif;transform:scaleX(0.7631);transform-origin:0 0;-webkit-text-stroke:0.35px #A4A49A;">1.45731</div>
<div class="t" style="left:1530.5px;top:1912.4px;font-size:29.00px;color:#A4A49A;font-weight:400;font-family:'Liberation Sans', sans-serif;transform:scaleX(0.7590);transform-origin:0 0;-webkit-text-stroke:0.35px #A4A49A;">12.260014</div>
<div class="t" style="left:1715.0px;top:1912.4px;font-size:29.00px;color:#A4A49A;font-weight:400;font-family:'Liberation Sans', sans-serif;transform:scaleX(0.7586);transform-origin:0 0;-webkit-text-stroke:0.35px #A4A49A;">NaN</div>
<div style="left:1398.0px;top:2846.0px;width:233.0px;height:52.0px;background:#ECE9D8;border:2px solid #202020;box-sizing:border-box;"></div>
<svg style="left:1406px;top:2850px" width="40" height="44"><circle cx="20" cy="10" r="6" fill="#E02020"/><path d="M6 40 L20 14 L34 40 Z" fill="#2050E0"/><path d="M12 40 L20 24 L28 40 Z" fill="#F0C020"/><circle cx="26" cy="30" r="7" fill="#fff" stroke="#405070" stroke-width="2"/></svg>
<div class="t" style="left:1493.0px;top:2856.8px;font-size:29.00px;color:#101010;font-weight:400;font-family:'Liberation Sans', sans-serif;transform:scaleX(0.7938);transform-origin:0 0;-webkit-text-stroke:0.35px #101010;">View modes</div>
<div style="left:811.0px;top:2964.0px;width:233.0px;height:52.0px;background:#ECE9D8;border:2px solid #202020;box-sizing:border-box;"></div>
<svg style="left:820px;top:2968px" width="40" height="44"><rect x="3" y="6" width="28" height="32" fill="#D8E8F8" stroke="#4070B0" stroke-width="2"/><path d="M8 22 L15 30 L30 8" stroke="#2050A0" stroke-width="4" fill="none"/></svg>
<div class="t" style="left:895.5px;top:2975.8px;font-size:29.00px;color:#101010;font-weight:400;font-family:'Liberation Sans', sans-serif;transform:scaleX(0.8165);transform-origin:0 0;-webkit-text-stroke:0.35px #101010;">Close</div>
<div style="left:1094.0px;top:2964.0px;width:233.0px;height:52.0px;background:#ECE9D8;border:2px solid #202020;box-sizing:border-box;"></div>
<svg style="left:1104px;top:2966px" width="40" height="46"><path d="M10 14 Q10 4 20 4 Q30 4 30 13 Q30 20 22 23 L22 30" stroke="#2A7AD8" stroke-width="6" fill="none"/><rect x="16" y="34" width="12" height="8" fill="#2A7AD8"/></svg>
<div class="t" style="left:1187.0px;top:2975.8px;font-size:29.00px;color:#101010;font-weight:400;font-family:'Liberation Sans', sans-serif;transform:scaleX(0.8390);transform-origin:0 0;-webkit-text-stroke:0.35px #101010;">Help</div>
<div class="t" style="left:654.0px;top:3076.4px;font-size:68.00px;color:#000;font-weight:400;font-family:'Liberation Serif', serif;transform:scaleX(0.9775);transform-origin:0 0;-webkit-text-stroke:0.3px #000;">(c) fiber characteristic parameters</div>
<div style="left:2078.0px;top:1632.0px;width:1771.0px;height:1427.0px;background:#0848F0;"></div>
<div style="left:2078.0px;top:1632.0px;width:1771.0px;height:75.0px;background:linear-gradient(#5AA0F0 0%,#2060F8 3%,#3A88F0 7%,#1C5CF4 14%,#0846F8 28%,#0644F8 50%,#0E4EF8 62%,#1A5CF4 74%,#1652F4 84%,#0032E8 93%,#2A62F0 100%);"></div>
<div style="left:2085.0px;top:1707.0px;width:1757.0px;height:1348.0px;background:#ECE9D8;"></div>
<div style="left:2085.0px;top:1707.0px;width:2.0px;height:1348.0px;background:#A8CCF4;"></div>
<div style="left:3681.0px;top:1648.0px;width:45.0px;height:50.0px;background:linear-gradient(135deg,#4A90F8,#1E5FE8 60%,#1850D8);border:2px solid #F0F4FF;border-radius:5px;box-sizing:border-box;"></div>
<div style="left:3694.5px;top:1679.0px;width:11.2px;height:6.5px;background:#fff;"></div>
<div style="left:3734.0px;top:1648.0px;width:47.0px;height:50.0px;background:linear-gradient(135deg,#4A90F8,#1E5FE8 60%,#1850D8);border:2px solid #F0F4FF;border-radius:5px;box-sizing:border-box;"></div>
<div style="left:3745.8px;top:1660.5px;width:23.5px;height:25.0px;border:2px solid #fff;border-top-width:6px;box-sizing:border-box;"></div>
<div style="left:3788.0px;top:1648.0px;width:46.0px;height:50.0px;background:linear-gradient(135deg,#F08A70,#E0401F 45%,#C8300F);border:2px solid #F4F0F0;border-radius:5px;box-sizing:border-box;"></div>
<svg style="left:3788px;top:1648px" width="46" height="50"><path d="M12.420000000000002 12.5 L33.58 37.5 M33.58 12.5 L12.420000000000002 37.5" stroke="#fff" stroke-width="5.1" stroke-linecap="square"/></svg>
<svg style="left:2089px;top:1651px" width="39.6" height="41.3" viewBox="0 0 46 48"><rect x="0" y="0" width="44" height="37" fill="#9ED0E8"/><rect x="2" y="2" width="40" height="33" fill="#C8F2EE"/><rect x="6" y="5" width="36" height="30" fill="#8EBAC4"/><rect x="11" y="37" width="23" height="10" fill="#E4F2EE" stroke="#9ED0E8" stroke-width="1.5"/><path d="M16 13 L9 20 L20 30 L31 26 L25 9 Z" stroke="#C8E0E8" stroke-width="2" fill="none"/><circle cx="16" cy="13" r="3.2" fill="#101830"/><circle cx="9" cy="20" r="2.8" fill="#404860"/><circle cx="20" cy="30" r="3.4" fill="#101020"/><circle cx="31" cy="26" r="3.6" fill="#0A1850"/><circle cx="25" cy="9" r="2.4" fill="#405070"/></svg>
<div class="t" style="left:2137.0px;top:1655.3px;font-size:35.00px;color:#fff;font-weight:400;font-family:'Liberation Sans', sans-serif;transform:scaleX(0.9108);transform-origin:0 0;text-shadow:1px 1px 1px #0A2A80;-webkit-text-stroke:0.7px #fff;">LAD v4.0: Graphic 3D</div>
<div style="left:2104.0px;top:1726.0px;width:1717.0px;height:1196.0px;border:3px solid #202020;box-sizing:border-box;"></div>
<div style="left:2125.6px;top:1750.0px;width:145.4px;height:1000.0px;border-style:solid;border-width:3px;border-color:#C8C8B8 #FFFFF8 #FFFFF8 #C8C8B8;box-shadow:1px 1px 0 #C8C8B8;box-sizing:border-box;"></div>
<svg style="left:2160px;top:1780px" width="64" height="100" viewBox="0 0 64 100"><path d="M8 40 L8 22 Q10 4 30 4 Q48 6 54 24 L60 24 L48 40 L38 24 L44 24 Q40 14 30 14 Q18 14 16 26 L16 40 Z" fill="#D8D8D0" stroke="#202020" stroke-width="2.5"/><path d="M8 50 L8 64 Q10 88 30 90 Q48 88 54 70 L60 70 L48 54 L38 70 L44 70 Q40 80 30 80 Q18 80 16 66 L16 50 Z" fill="#D8D8D0" stroke="#202020" stroke-width="2.5"/></svg>
<div style="left:2187.0px;top:1916.0px;width:4.0px;height:735.0px;background:#8A8A80;border-right:2px solid #fff;"></div>
<svg style="left:2215px;top:1925px" width="20" height="725"><rect x="4" y="3" width="10" height="5" fill="#151515"/><rect x="4" y="18.9" width="10" height="5" fill="#151515"/><rect x="4" y="34.8" width="10" height="5" fill="#151515"/><rect x="4" y="50.699999999999996" width="10" height="5" fill="#151515"/><rect x="4" y="66.6" width="10" height="5" fill="#151515"/><rect x="4" y="82.5" width="10" height="5" fill="#151515"/><rect x="4" y="98.4" width="10" height="5" fill="#151515"/><rect x="4" y="114.30000000000001" width="10" height="5" fill="#151515"/><rect x="4" y="130.20000000000002" width="10" height="5" fill="#151515"/><rect x="4" y="146.10000000000002" width="10" height="5" fill="#151515"/><rect x="4" y="162.00000000000003" width="10" height="5" fill="#151515"/><rect x="4" y="177.90000000000003" width="10" height="5" fill="#151515"/><rect x="4" y="193.80000000000004" width="10" height="5" fill="#151515"/><rect x="4" y="209.70000000000005" width="10" height="5" fill="#151515"/><rect x="4" y="225.60000000000005" width="10" height="5" fill="#151515"/><rect x="4" y="241.50000000000006" width="10" height="5" fill="#151515"/><rect x="4" y="257.40000000000003" width="10" height="5" fill="#151515"/><rect x="4" y="273.3" width="10" height="5" fill="#151515"/><rect x="4" y="289.2" width="10" height="5" fill="#151515"/><rect x="4" y="305.09999999999997" width="10" height="5" fill="#151515"/><rect x="4" y="320.99999999999994" width="10" height="5" fill="#151515"/><rect x="4" y="336.8999999999999" width="10" height="5" fill="#151515"/><rect x="4" y="352.7999999999999" width="10" height="5" fill="#151515"/><rect x="4" y="368.6999999999999" width="10" height="5" fill="#151515"/><rect x="4" y="384.59999999999985" width="10" height="5" fill="#151515"/><rect x="4" y="400.49999999999983" width="10" height="5" fill="#151515"/><rect x="4" y="416.3999999999998" width="10" height="5" fill="#151515"/><rect x="4" y="432.2999999999998" width="10" height="5" fill="#151515"/><rect x="4" y="448.19999999999976" width="10" height="5" fill="#151515"/><rect x="4" y="464.09999999999974" width="10" height="5" fill="#151515"/><rect x="4" y="479.9999999999997" width="10" height="5" fill="#151515"/><rect x="4" y="495.8999999999997" width="10" height="5" fill="#151515"/><rect x="4" y="511.79999999999967" width="10" height="5" fill="#151515"/><rect x="4" y="527.6999999999997" width="10" height="5" fill="#151515"/><rect x="4" y="543.5999999999997" width="10" height="5" fill="#151515"/><rect x="4" y="559.4999999999997" width="10" height="5" fill="#151515"/><rect x="4" y="575.3999999999996" width="10" height="5" fill="#151515"/><rect x="4" y="591.2999999999996" width="10" height="5" fill="#151515"/><rect x="4" y="607.1999999999996" width="10" height="5" fill="#151515"/><rect x="4" y="623.0999999999996" width="10" height="5" fill="#151515"/><rect x="4" y="638.9999999999995" width="10" height="5" fill="#151515"/><rect x="4" y="654.8999999999995" width="10" height="5" fill="#151515"/><rect x="4" y="670.7999999999995" width="10" height="5" fill="#151515"/><rect x="4" y="686.6999999999995" width="10" height="5" fill="#151515"/><rect x="4" y="702.5999999999995" width="10" height="5" fill="#151515"/><rect x="4" y="718.4999999999994" width="10" height="5" fill="#151515"/></svg>
<svg style="left:2163px;top:2534px" width="58" height="34"><path d="M3 3 L40 3 L54 16 L40 30 L3 30 Z" fill="#F4F2E6" stroke="#9A9A8C" stroke-width="3"/></svg>
<div style="left:2145.0px;top:2674.0px;width:90.0px;height:48.0px;background:#ECE9D8;border-style:solid;border-width:3px;border-color:#9C9C94 #FAFAF4 #FAFAF4 #9C9C94;box-sizing:border-box;"></div>
<div class="t" style="left:2175.0px;top:2683.8px;font-size:29.00px;color:#B8B8A8;font-weight:400;font-family:'Liberation Sans', sans-serif;transform:scaleX(0.9320);transform-origin:0 0;-webkit-text-stroke:0.35px #B8B8A8;">45</div>
<div style="left:2124.5px;top:2806.0px;width:149.5px;height:59.0px;background:#ECE9D8;border:3px solid #202020;box-sizing:border-box;"></div>
<div class="t" style="left:2168.0px;top:2820.5px;font-size:29.00px;color:#101010;font-weight:400;font-family:'Liberation Sans', sans-serif;transform:scaleX(0.8720);transform-origin:0 0;-webkit-text-stroke:0.35px #101010;">Reset</div>
<div style="left:2293.0px;top:1750.0px;width:970.0px;height:994.0px;border:3px solid #202020;box-sizing:border-box;"></div>
<div class="t" style="left:2739.0px;top:1802.8px;font-size:29.00px;color:#101010;font-weight:400;font-family:'Liberation Sans', sans-serif;transform:scaleX(0.8506);transform-origin:0 0;-webkit-text-stroke:0.35px #101010;">Modes</div>
<svg style="left:2293px;top:1750px" width="970" height="994"><line x1="486" y1="192" x2="236.69999999999982" y2="380" stroke="#1A1A1A" stroke-width="2.6"/><line x1="486" y1="192" x2="737" y2="380" stroke="#1A1A1A" stroke-width="2.6"/><line x1="236.69999999999982" y1="380" x2="236.69999999999982" y2="650" stroke="#1A1A1A" stroke-width="2.6"/><line x1="737" y1="380" x2="737" y2="650" stroke="#1A1A1A" stroke-width="2.6"/><line x1="486" y1="192" x2="486" y2="462" stroke="#1A1A1A" stroke-width="2.6"/><line x1="236.69999999999982" y1="650" x2="486" y2="462" stroke="#1A1A1A" stroke-width="2.6"/><line x1="737" y1="650" x2="486" y2="462" stroke="#1A1A1A" stroke-width="2.6"/><line x1="236.69999999999982" y1="650" x2="486" y2="839" stroke="#1A1A1A" stroke-width="2.6"/><line x1="737" y1="650" x2="486" y2="839" stroke="#1A1A1A" stroke-width="2.6"/><line x1="423.7" y1="239.0" x2="419.5" y2="233.4" stroke="#1A1A1A" stroke-width="3"/><line x1="361.3" y1="286.0" x2="357.1" y2="280.4" stroke="#1A1A1A" stroke-width="3"/><line x1="299.0" y1="333.0" x2="294.8" y2="327.4" stroke="#1A1A1A" stroke-width="3"/><line x1="548.8" y1="239.0" x2="552.9" y2="233.4" stroke="#1A1A1A" stroke-width="3"/><line x1="611.5" y1="286.0" x2="615.7" y2="280.4" stroke="#1A1A1A" stroke-width="3"/><line x1="674.2" y1="333.0" x2="678.4" y2="327.4" stroke="#1A1A1A" stroke-width="3"/><line x1="299.0" y1="697.2" x2="294.8" y2="702.8" stroke="#1A1A1A" stroke-width="3"/><line x1="361.3" y1="744.5" x2="357.1" y2="750.1" stroke="#1A1A1A" stroke-width="3"/><line x1="423.7" y1="791.8" x2="419.4" y2="797.3" stroke="#1A1A1A" stroke-width="3"/><line x1="674.2" y1="697.2" x2="678.5" y2="702.8" stroke="#1A1A1A" stroke-width="3"/><line x1="611.5" y1="744.5" x2="615.7" y2="750.1" stroke="#1A1A1A" stroke-width="3"/><line x1="548.8" y1="791.8" x2="553.0" y2="797.3" stroke="#1A1A1A" stroke-width="3"/><line x1="236.69999999999982" y1="487" x2="230.69999999999982" y2="482" stroke="#1A1A1A" stroke-width="2.5"/><line x1="737" y1="487" x2="743" y2="482" stroke="#1A1A1A" stroke-width="2.5"/><defs><radialGradient id="glow" cx="0.5" cy="0.5" r="0.5"><stop offset="0" stop-color="#F8E020"/><stop offset="0.45" stop-color="#F8A020"/><stop offset="1" stop-color="#FF2020" stop-opacity="0"/></radialGradient><linearGradient id="pk1" x1="0" y1="0" x2="0" y2="1"><stop offset="0" stop-color="#2A20E0"/><stop offset="0.14" stop-color="#1030E8"/><stop offset="0.26" stop-color="#2878F0"/><stop offset="0.33" stop-color="#90E8E0"/><stop offset="0.41" stop-color="#40B060"/><stop offset="0.5" stop-color="#106818"/><stop offset="0.58" stop-color="#30A020"/><stop offset="0.67" stop-color="#C8F020"/><stop offset="0.74" stop-color="#F0E020"/><stop offset="0.84" stop-color="#F89020"/><stop offset="0.95" stop-color="#FF1E1E"/></linearGradient><linearGradient id="pk2" x1="0" y1="0" x2="0" y2="1"><stop offset="0" stop-color="#2A20E0"/><stop offset="0.14" stop-color="#1030E8"/><stop offset="0.26" stop-color="#2878F0"/><stop offset="0.33" stop-color="#90E8E0"/><stop offset="0.41" stop-color="#40B060"/><stop offset="0.5" stop-color="#106818"/><stop offset="0.58" stop-color="#30A020"/><stop offset="0.67" stop-color="#C8F020"/><stop offset="0.74" stop-color="#F0E020"/><stop offset="0.84" stop-color="#F89020"/><stop offset="0.95" stop-color="#FF1E1E"/></linearGradient></defs><path d="M300.8,649.6 L486.0,510.5 L671.8,649.6 L486.0,788.7 Z" fill="#FF1E1E"/><ellipse cx="469" cy="655" rx="80" ry="40" fill="url(#glow)" opacity="0.8"/><path d="M460.0,409.0 C477.0,412.0 489.0,460.0 502.0,510.0 L532.0,630.0 L552.0,690.0 L387.0,690.0 C405.0,650.0 410.0,580.0 419.0,495.0 C429.0,425.0 445.0,410.0 460.0,409.0 Z" fill="url(#pk1)"/><path d="M532.0,346.0 C549.0,350.0 559.0,430.0 565.0,490.0 C573.0,570.0 585.0,620.0 599.0,670.0 L542.0,690.0 C522.0,620.0 507.0,580.0 501.0,520.0 C499.0,450.0 513.0,348.0 532.0,346.0 Z" fill="url(#pk2)"/></svg>
<div class="t" style="left:2606px;top:2005px;font-size:16px;color:#9A9A90;transform:translate(-50%,-50%) rotate(-37deg);">X (m)</div>
<div class="t" style="left:2640px;top:2025px;font-size:14px;color:#9A9A90;transform:translate(-50%,-50%) rotate(-37deg);">0</div>
<div class="t" style="left:2505px;top:2120px;font-size:13px;color:#9A9A90;transform:translate(-50%,-50%) rotate(-37deg);">-2e-05</div>
<div class="t" style="left:2952px;top:2005px;font-size:16px;color:#9A9A90;transform:translate(-50%,-50%) rotate(37deg);">Y (m)</div>
<div class="t" style="left:2920px;top:2025px;font-size:14px;color:#9A9A90;transform:translate(-50%,-50%) rotate(37deg);">0</div>
<div class="t" style="left:3055px;top:2120px;font-size:13px;color:#9A9A90;transform:translate(-50%,-50%) rotate(37deg);">2e-05</div>
<div class="t" style="left:2497px;top:2295px;font-size:18px;color:#9A9A90;transform:translate(-50%,-50%) rotate(-90deg);">Z</div>
<div class="t" style="left:3063px;top:2295px;font-size:18px;color:#9A9A90;transform:translate(-50%,-50%) rotate(-90deg);">Z</div>
<div class="t" style="left:2513px;top:2410px;font-size:16px;color:#9A9A90;transform:translate(-50%,-50%) rotate(-37deg);">0</div>
<div class="t" style="left:3045px;top:2410px;font-size:16px;color:#9A9A90;transform:translate(-50%,-50%) rotate(37deg);">0</div>
<div class="t" style="left:2610px;top:2520px;font-size:16px;color:#9A9A90;transform:translate(-50%,-50%) rotate(37deg);">Y (m)</div>
<div class="t" style="left:2640px;top:2485px;font-size:14px;color:#9A9A90;transform:translate(-50%,-50%) rotate(37deg);">0</div>
<div class="t" style="left:2945px;top:2520px;font-size:16px;color:#9A9A90;transform:translate(-50%,-50%) rotate(-37deg);">X (m)</div>
<div class="t" style="left:2920px;top:2485px;font-size:14px;color:#9A9A90;transform:translate(-50%,-50%) rotate(-37deg);">0</div>
<div class="t" style="left:2779px;top:2605px;font-size:13px;color:#9A9A90;transform:translate(-50%,-50%) rotate(-37deg);">2e-05 2e-05</div>
<div style="left:2293.5px;top:2759.0px;width:966.5px;height:143.0px;border-style:solid;border-width:3px;border-color:#C8C8B8 #FFFFF8 #FFFFF8 #C8C8B8;box-shadow:1px 1px 0 #C8C8B8;box-sizing:border-box;"></div>
<svg style="left:2334px;top:2805px" width="92" height="62" viewBox="0 0 92 62"><path d="M40 4 L40 16 Q18 14 14 30 Q14 44 28 48 L30 42 L40 56 L24 58 L26 52 Q4 48 4 30 Q6 6 40 4 Z" fill="#E8E8E0" stroke="#202020" stroke-width="2.5"/><path d="M52 4 L52 16 Q74 14 78 30 Q78 44 64 48 L62 42 L52 56 L68 58 L66 52 Q88 48 88 30 Q86 6 52 4 Z" fill="#E8E8E0" stroke="#202020" stroke-width="2.5"/></svg>
<div style="left:2461.0px;top:2811.0px;width:670.0px;height:6.0px;background:#9A9A8C;border-bottom:2px solid #fff;"></div>
<svg style="left:2470px;top:2846px" width="660" height="14"><rect x="3.0" y="2" width="3" height="9" fill="#151515"/><rect x="12.0" y="2" width="3" height="9" fill="#151515"/><rect x="21.0" y="2" width="3" height="9" fill="#151515"/><rect x="30.0" y="2" width="3" height="9" fill="#151515"/><rect x="39.0" y="2" width="3" height="9" fill="#151515"/><rect x="48.0" y="2" width="3" height="9" fill="#151515"/><rect x="57.0" y="2" width="3" height="9" fill="#151515"/><rect x="66.0" y="2" width="3" height="9" fill="#151515"/><rect x="75.0" y="2" width="3" height="9" fill="#151515"/><rect x="84.0" y="2" width="3" height="9" fill="#151515"/><rect x="93.0" y="2" width="3" height="9" fill="#151515"/><rect x="102.0" y="2" width="3" height="9" fill="#151515"/><rect x="111.0" y="2" width="3" height="9" fill="#151515"/><rect x="120.0" y="2" width="3" height="9" fill="#151515"/><rect x="129.0" y="2" width="3" height="9" fill="#151515"/><rect x="138.0" y="2" width="3" height="9" fill="#151515"/><rect x="147.0" y="2" width="3" height="9" fill="#151515"/><rect x="156.0" y="2" width="3" height="9" fill="#151515"/><rect x="165.0" y="2" width="3" height="9" fill="#151515"/><rect x="174.0" y="2" width="3" height="9" fill="#151515"/><rect x="183.0" y="2" width="3" height="9" fill="#151515"/><rect x="192.0" y="2" width="3" height="9" fill="#151515"/><rect x="201.0" y="2" width="3" height="9" fill="#151515"/><rect x="210.0" y="2" width="3" height="9" fill="#151515"/><rect x="219.0" y="2" width="3" height="9" fill="#151515"/><rect x="228.0" y="2" width="3" height="9" fill="#151515"/><rect x="237.0" y="2" width="3" height="9" fill="#151515"/><rect x="246.0" y="2" width="3" height="9" fill="#151515"/><rect x="255.0" y="2" width="3" height="9" fill="#151515"/><rect x="264.0" y="2" width="3" height="9" fill="#151515"/><rect x="273.0" y="2" width="3" height="9" fill="#151515"/><rect x="282.0" y="2" width="3" height="9" fill="#151515"/><rect x="291.0" y="2" width="3" height="9" fill="#151515"/><rect x="300.0" y="2" width="3" height="9" fill="#151515"/><rect x="309.0" y="2" width="3" height="9" fill="#151515"/><rect x="318.0" y="2" width="3" height="9" fill="#151515"/><rect x="327.0" y="2" width="3" height="9" fill="#151515"/><rect x="336.0" y="2" width="3" height="9" fill="#151515"/><rect x="345.0" y="2" width="3" height="9" fill="#151515"/><rect x="354.0" y="2" width="3" height="9" fill="#151515"/><rect x="363.0" y="2" width="3" height="9" fill="#151515"/><rect x="372.0" y="2" width="3" height="9" fill="#151515"/><rect x="381.0" y="2" width="3" height="9" fill="#151515"/><rect x="390.0" y="2" width="3" height="9" fill="#151515"/><rect x="399.0" y="2" width="3" height="9" fill="#151515"/><rect x="408.0" y="2" width="3" height="9" fill="#151515"/><rect x="417.0" y="2" width="3" height="9" fill="#151515"/><rect x="426.0" y="2" width="3" height="9" fill="#151515"/><rect x="435.0" y="2" width="3" height="9" fill="#151515"/><rect x="444.0" y="2" width="3" height="9" fill="#151515"/><rect x="453.0" y="2" width="3" height="9" fill="#151515"/><rect x="462.0" y="2" width="3" height="9" fill="#151515"/><rect x="471.0" y="2" width="3" height="9" fill="#151515"/><rect x="480.0" y="2" width="3" height="9" fill="#151515"/><rect x="489.0" y="2" width="3" height="9" fill="#151515"/><rect x="498.0" y="2" width="3" height="9" fill="#151515"/><rect x="507.0" y="2" width="3" height="9" fill="#151515"/><rect x="516.0" y="2" width="3" height="9" fill="#151515"/><rect x="525.0" y="2" width="3" height="9" fill="#151515"/><rect x="534.0" y="2" width="3" height="9" fill="#151515"/><rect x="543.0" y="2" width="3" height="9" fill="#151515"/><rect x="552.0" y="2" width="3" height="9" fill="#151515"/><rect x="561.0" y="2" width="3" height="9" fill="#151515"/><rect x="570.0" y="2" width="3" height="9" fill="#151515"/><rect x="579.0" y="2" width="3" height="9" fill="#151515"/><rect x="588.0" y="2" width="3" height="9" fill="#151515"/><rect x="597.0" y="2" width="3" height="9" fill="#151515"/><rect x="606.0" y="2" width="3" height="9" fill="#151515"/><rect x="615.0" y="2" width="3" height="9" fill="#151515"/><rect x="624.0" y="2" width="3" height="9" fill="#151515"/><rect x="633.0" y="2" width="3" height="9" fill="#151515"/><rect x="642.0" y="2" width="3" height="9" fill="#151515"/><rect x="651.0" y="2" width="3" height="9" fill="#151515"/></svg>
<svg style="left:2700px;top:2788px" width="32" height="58"><path d="M3 3 L29 3 L29 38 L16 54 L3 38 Z" fill="#F4F2E6" stroke="#9A9A8C" stroke-width="3"/></svg>
<div style="left:3152.6px;top:2807.0px;width:90.9px;height:48.0px;background:#ECE9D8;border-style:solid;border-width:3px;border-color:#9C9C94 #FAFAF4 #FAFAF4 #9C9C94;box-sizing:border-box;"></div>
<div class="t" style="left:3179.0px;top:2814.3px;font-size:29.00px;color:#B8B8A8;font-weight:400;font-family:'Liberation Sans', sans-serif;transform:scaleX(0.8383);transform-origin:0 0;-webkit-text-stroke:0.35px #B8B8A8;">135</div>
<div style="left:2277.0px;top:2966.0px;width:274.0px;height:59.0px;background:#ECE9D8;border:3px solid #202020;box-sizing:border-box;"></div>
<div class="t" style="left:2388.0px;top:2981.8px;font-size:29.00px;color:#101010;font-weight:400;font-family:'Liberation Sans', sans-serif;transform:scaleX(0.9061);transform-origin:0 0;-webkit-text-stroke:0.35px #101010;">Print</div>
<div style="left:2571.0px;top:2966.0px;width:274.0px;height:59.0px;background:#ECE9D8;border:3px solid #202020;box-sizing:border-box;"></div>
<div class="t" style="left:2616.4px;top:2981.8px;font-size:29.00px;color:#101010;font-weight:400;font-family:'Liberation Sans', sans-serif;transform:scaleX(0.8861);transform-origin:0 0;-webkit-text-stroke:0.35px #101010;">Export to image</div>
<div style="left:2865.0px;top:2966.0px;width:275.0px;height:59.0px;background:#ECE9D8;border:3px solid #202020;box-sizing:border-box;"></div>
<div class="t" style="left:2926.0px;top:2981.8px;font-size:29.00px;color:#101010;font-weight:400;font-family:'Liberation Sans', sans-serif;transform:scaleX(0.8840);transform-origin:0 0;-webkit-text-stroke:0.35px #101010;">Export to text</div>
<div style="left:3160.0px;top:2966.0px;width:274.0px;height:59.0px;background:#ECE9D8;border:3px solid #202020;box-sizing:border-box;"></div>
<div class="t" style="left:3276.0px;top:2981.8px;font-size:29.00px;color:#101010;font-weight:400;font-family:'Liberation Sans', sans-serif;transform:scaleX(0.9113);transform-origin:0 0;-webkit-text-stroke:0.35px #101010;">Exit</div>
<div style="left:3454.0px;top:2966.0px;width:273.0px;height:59.0px;background:#ECE9D8;border:3px solid #202020;box-sizing:border-box;"></div>
<div class="t" style="left:3565.5px;top:2981.8px;font-size:29.00px;color:#101010;font-weight:400;font-family:'Liberation Sans', sans-serif;transform:scaleX(0.8977);transform-origin:0 0;-webkit-text-stroke:0.35px #101010;">Help</div>
<svg style="left:2288px;top:2976px" width="44" height="42"><rect x="10" y="2" width="22" height="14" fill="#E8F0F8" stroke="#3060A0" stroke-width="2"/><path d="M2 18 L40 18 L42 34 L4 36 Z" fill="#7080A0" stroke="#202030" stroke-width="2"/><rect x="6" y="30" width="32" height="8" fill="#202030"/></svg>
<svg style="left:2584px;top:2976px" width="38" height="42"><rect x="2" y="2" width="32" height="38" fill="#C8D8E8" stroke="#30507A" stroke-width="2"/><path d="M4 18 L18 18 L18 10 L32 21 L18 32 L18 24 L4 24 Z" fill="#E01818"/></svg>
<svg style="left:2878px;top:2976px" width="38" height="42"><rect x="2" y="2" width="32" height="38" fill="#C8D8E8" stroke="#30507A" stroke-width="2"/><path d="M4 18 L18 18 L18 10 L32 21 L18 32 L18 24 L4 24 Z" fill="#E01818"/></svg>
<svg style="left:3172px;top:2974px" width="40" height="46"><path d="M18 4 L36 8 L36 42 L18 44 Z" fill="#4AA8E0" stroke="#205080" stroke-width="2"/><path d="M2 22 L14 22 L14 16 L22 25 L14 34 L14 28 L2 28 Z" fill="#40B0E8" stroke="#205080" stroke-width="1.5"/></svg>
<svg style="left:3470px;top:2970px" width="36" height="52"><path d="M6 16 Q6 4 18 4 Q30 4 30 15 Q30 23 20 26 L20 32" stroke="#2A8AE8" stroke-width="7" fill="none"/><rect x="12" y="38" width="14" height="10" fill="#2A6AE8"/></svg>
<div style="left:3283.0px;top:1750.0px;width:522.0px;height:177.0px;border:3px solid #202020;box-sizing:border-box;"></div>
<div class="t" style="left:3309.0px;top:1785.2px;font-size:29.00px;color:#101010;font-weight:400;font-family:'Liberation Sans', sans-serif;transform:scaleX(0.8861);transform-origin:0 0;-webkit-text-stroke:0.35px #101010;">Serie</div>
<div style="left:3436.0px;top:1773.5px;width:348.0px;height:46.5px;background:#fff;border-style:solid;border-width:3px;border-color:#8C8C84 #F4F4EE #F4F4EE #8C8C84;box-sizing:border-box;"></div>
<div style="left:3440.0px;top:1778.0px;width:303.0px;height:38.0px;background:#2262DC;"></div>
<div class="t" style="left:3464.7px;top:1782.8px;font-size:29.00px;color:#fff;font-weight:400;font-family:'Liberation Sans', sans-serif;transform:scaleX(0.8392);transform-origin:0 0;-webkit-text-stroke:0.35px #fff;">LP11</div>
<div style="left:3745.0px;top:1777.0px;width:37.0px;height:40.0px;background:#ECE9D8;border-style:solid;border-width:2px 4px 4px 2px;border-color:#F8F8F4 #8A8A80 #8A8A80 #F8F8F4;box-sizing:border-box;"></div>
<svg style="left:3745px;top:1777px" width="37" height="40"><path d="M11.84 16.0 L25.16 16.0 L18.5 24.8 Z" fill="#000"/></svg>
<div style="left:3283.0px;top:1949.0px;width:522.0px;height:258.0px;border:3px solid #202020;box-sizing:border-box;"></div>
<div class="t" style="left:3296.5px;top:1985.4px;font-size:29.00px;color:#101010;font-weight:400;font-family:'Liberation Sans', sans-serif;transform:scaleX(0.9228);transform-origin:0 0;-webkit-text-stroke:0.35px #101010;">Title:</div>
<div style="left:3360.0px;top:1971.6px;width:278.0px;height:46.4px;background:#fff;border-style:solid;border-width:3px;border-color:#8C8C84 #F4F4EE #F4F4EE #8C8C84;box-sizing:border-box;"></div>
<div class="t" style="left:3367.0px;top:1978.8px;font-size:29.00px;color:#101010;font-weight:400;font-family:'Liberation Sans', sans-serif;transform:scaleX(0.8161);transform-origin:0 0;-webkit-text-stroke:0.35px #101010;">Modes</div>
<div style="left:3659.0px;top:1971.6px;width:130.0px;height:57.4px;background:#ECE9D8;border:3px solid #202020;box-sizing:border-box;"></div>
<div class="t" style="left:3725.0px;top:1985.8px;font-size:29.00px;color:#101010;font-weight:400;font-family:'Liberation Sans', sans-serif;transform:scaleX(0.9394);transform-origin:0 0;-webkit-text-stroke:0.35px #101010;">Title</div>
<svg style="left:3672px;top:1981.6px" width="38" height="38"><text x="4" y="28" font-family="Liberation Serif" font-style="italic" font-weight="bold" font-size="30" fill="#1A2AA0">A</text><text x="10" y="30" font-family="Liberation Serif" font-style="italic" font-weight="bold" font-size="28" fill="#1A2AA0">A</text><rect x="4" y="32" width="26" height="3" fill="#1A2AA0"/></svg>
<div style="left:3659.0px;top:2051.0px;width:130.0px;height:58.6px;background:#ECE9D8;border:3px solid #202020;box-sizing:border-box;"></div>
<div class="t" style="left:3713.0px;top:2064.8px;font-size:29.00px;color:#101010;font-weight:400;font-family:'Liberation Sans', sans-serif;transform:scaleX(0.8772);transform-origin:0 0;-webkit-text-stroke:0.35px #101010;">Units</div>
<svg style="left:3672px;top:2061px" width="38" height="38"><text x="4" y="28" font-family="Liberation Serif" font-style="italic" font-weight="bold" font-size="30" fill="#1A2AA0">A</text><text x="10" y="30" font-family="Liberation Serif" font-style="italic" font-weight="bold" font-size="28" fill="#1A2AA0">A</text><rect x="4" y="32" width="26" height="3" fill="#1A2AA0"/></svg>
<div style="left:3659.0px;top:2131.0px;width:130.0px;height:59.0px;background:#ECE9D8;border:3px solid #202020;box-sizing:border-box;"></div>
<div class="t" style="left:3725.0px;top:2143.4px;font-size:29.00px;color:#101010;font-weight:400;font-family:'Liberation Sans', sans-serif;transform:scaleX(0.8758);transform-origin:0 0;-webkit-text-stroke:0.35px #101010;">Axis</div>
<svg style="left:3672px;top:2141px" width="38" height="38"><text x="4" y="28" font-family="Liberation Serif" font-style="italic" font-weight="bold" font-size="30" fill="#1A2AA0">A</text><text x="10" y="30" font-family="Liberation Serif" font-style="italic" font-weight="bold" font-size="28" fill="#1A2AA0">A</text><rect x="4" y="32" width="26" height="3" fill="#1A2AA0"/></svg>
<div class="t" style="left:3296.5px;top:2066.4px;font-size:29.00px;color:#101010;font-weight:400;font-family:'Liberation Sans', sans-serif;transform:scaleX(0.8560);transform-origin:0 0;-webkit-text-stroke:0.35px #101010;">Area</div>
<div style="left:3360.0px;top:2051.0px;width:74.0px;height:59.0px;border:3px solid #202020;box-sizing:border-box;"></div>
<div class="t" style="left:3495.0px;top:2066.4px;font-size:29.00px;color:#101010;font-weight:400;font-family:'Liberation Sans', sans-serif;transform:scaleX(0.8744);transform-origin:0 0;-webkit-text-stroke:0.35px #101010;">Chart</div>
<div style="left:3565.0px;top:2051.0px;width:74.0px;height:59.0px;border:3px solid #202020;box-sizing:border-box;"></div>
<div style="left:3304.5px;top:2145.0px;width:27.5px;height:29.0px;background:#fff;border-style:solid;border-width:3px;border-color:#8A8A80 #F4F4EE #F4F4EE #8A8A80;box-sizing:border-box;"></div>
<div class="t" style="left:3346.0px;top:2143.4px;font-size:29.00px;color:#101010;font-weight:400;font-family:'Liberation Sans', sans-serif;transform:scaleX(0.8944);transform-origin:0 0;-webkit-text-stroke:0.35px #101010;">Use antialias</div>
<div style="left:3283.0px;top:2278.6px;width:522.0px;height:285.4px;border-style:solid;border-width:2px 3px 3px 2px;border-color:#FFFFF8 #A8A898 #A8A898 #FFFFF8;box-sizing:border-box;"></div>
<div style="left:3387.0px;top:2236.0px;width:94.0px;height:44.0px;border-style:solid;border-width:2px 3px 0 2px;border-color:#FFFFF8 #A8A898 #A8A898 #FFFFF8;box-sizing:border-box;"></div>
<div style="left:3481.0px;top:2236.0px;width:99.0px;height:44.0px;border-style:solid;border-width:2px 3px 0 2px;border-color:#FFFFF8 #A8A898 #A8A898 #FFFFF8;box-sizing:border-box;"></div>
<div style="left:3284.5px;top:2228.8px;width:103.5px;height:52.2px;background:#ECE9D8;border-style:solid;border-width:2px 3px 0 2px;border-color:#FFFFF8 #A8A898 #A8A898 #FFFFF8;box-sizing:border-box;"></div>
<div class="t" style="left:3301.0px;top:2234.8px;font-size:29.00px;color:#101010;font-weight:400;font-family:'Liberation Sans', sans-serif;transform:scaleX(0.7851);transform-origin:0 0;-webkit-text-stroke:0.35px #101010;">X-Axis</div>
<div class="t" style="left:3398.8px;top:2241.3px;font-size:29.00px;color:#101010;font-weight:400;font-family:'Liberation Sans', sans-serif;transform:scaleX(0.8227);transform-origin:0 0;-webkit-text-stroke:0.35px #101010;">Y-Axis</div>
<div class="t" style="left:3498.0px;top:2241.3px;font-size:29.00px;color:#101010;font-weight:400;font-family:'Liberation Sans', sans-serif;transform:scaleX(0.7967);transform-origin:0 0;-webkit-text-stroke:0.35px #101010;">Z-Axis</div>
<div class="t" style="left:3315.6px;top:2323.8px;font-size:29.00px;color:#101010;font-weight:400;font-family:'Liberation Sans', sans-serif;transform:scaleX(0.8969);transform-origin:0 0;-webkit-text-stroke:0.35px #101010;">Title:</div>
<div style="left:3386.8px;top:2314.0px;width:388.2px;height:44.8px;background:#fff;border-style:solid;border-width:3px;border-color:#8C8C84 #F4F4EE #F4F4EE #8C8C84;box-sizing:border-box;"></div>
<div class="t" style="left:3392.0px;top:2318.8px;font-size:29.00px;color:#101010;font-weight:400;font-family:'Liberation Sans', sans-serif;-webkit-text-stroke:0.35px #101010;">X</div>
<div style="left:3311.0px;top:2388.0px;width:26.0px;height:26.0px;background:#fff;border:2px solid #8A8A80;box-sizing:border-box;"></div>
<div class="t" style="left:3353.0px;top:2385.1px;font-size:29.00px;color:#101010;font-weight:400;font-family:'Liberation Sans', sans-serif;transform:scaleX(0.8966);transform-origin:0 0;-webkit-text-stroke:0.35px #101010;">Grid XY</div>
<div style="left:3460.6px;top:2388.0px;width:26.0px;height:26.0px;background:#fff;border:2px solid #8A8A80;box-sizing:border-box;"></div>
<div class="t" style="left:3502.5px;top:2385.1px;font-size:29.00px;color:#101010;font-weight:400;font-family:'Liberation Sans', sans-serif;transform:scaleX(0.8959);transform-origin:0 0;-webkit-text-stroke:0.35px #101010;">Grid XZ</div>
<div style="left:3628.5px;top:2383.0px;width:144.5px;height:47.0px;background:#fff;border-style:solid;border-width:3px;border-color:#8C8C84 #F4F4EE #F4F4EE #8C8C84;box-sizing:border-box;"></div>
<div style="left:3735.0px;top:2387.0px;width:36.0px;height:40.0px;background:#ECE9D8;border-style:solid;border-width:2px 4px 4px 2px;border-color:#F8F8F4 #8A8A80 #8A8A80 #F8F8F4;box-sizing:border-box;"></div>
<svg style="left:3735px;top:2387px" width="36" height="40"><path d="M11.52 16.0 L24.48 16.0 L18.0 24.8 Z" fill="#000"/></svg>
<div class="t" style="left:3636.0px;top:2393.5px;font-size:29.00px;color:#101010;font-weight:400;font-family:'Liberation Sans', sans-serif;-webkit-text-stroke:0.35px #101010;">m</div>
<div style="left:3311.0px;top:2446.0px;width:26.0px;height:26.0px;background:#fff;border:2px solid #8A8A80;box-sizing:border-box;"></div>
<svg style="left:3311px;top:2446px" width="26" height="26" viewBox="0 0 10 10"><path d="M2.2 4.8 L4.1 6.9 L8 2.8" stroke="#000" stroke-width="1.7" fill="none"/></svg>
<div class="t" style="left:3353.0px;top:2445.8px;font-size:29.00px;color:#101010;font-weight:400;font-family:'Liberation Sans', sans-serif;transform:scaleX(0.8742);transform-origin:0 0;-webkit-text-stroke:0.35px #101010;">Auto unit major</div>
<div style="left:3536.0px;top:2443.0px;width:90.0px;height:44.0px;background:#ECE9D8;border-style:solid;border-width:3px;border-color:#9C9C94 #FAFAF4 #FAFAF4 #9C9C94;box-sizing:border-box;"></div>
<div class="t" style="left:3542.0px;top:2443.8px;font-size:29.00px;color:#B8B8A8;font-weight:400;font-family:'Liberation Sans', sans-serif;transform:scaleX(0.8486);transform-origin:0 0;-webkit-text-stroke:0.35px #B8B8A8;">2e-05</div>
<div class="t" style="left:3633.0px;top:2452.8px;font-size:29.00px;color:#101010;font-weight:400;font-family:'Liberation Sans', sans-serif;-webkit-text-stroke:0.35px #101010;">m</div>
<div style="left:3311.0px;top:2505.0px;width:26.0px;height:26.0px;background:#fff;border:2px solid #8A8A80;box-sizing:border-box;"></div>
<svg style="left:3311px;top:2505px" width="26" height="26" viewBox="0 0 10 10"><path d="M2.2 4.8 L4.1 6.9 L8 2.8" stroke="#000" stroke-width="1.7" fill="none"/></svg>
<div class="t" style="left:3353.0px;top:2505.4px;font-size:29.00px;color:#101010;font-weight:400;font-family:'Liberation Sans', sans-serif;transform:scaleX(0.8742);transform-origin:0 0;-webkit-text-stroke:0.35px #101010;">Auto unit minor</div>
<div style="left:3536.0px;top:2502.0px;width:90.0px;height:44.0px;background:#ECE9D8;border-style:solid;border-width:3px;border-color:#9C9C94 #FAFAF4 #FAFAF4 #9C9C94;box-sizing:border-box;"></div>
<div class="t" style="left:3542.0px;top:2503.4px;font-size:29.00px;color:#B8B8A8;font-weight:400;font-family:'Liberation Sans', sans-serif;transform:scaleX(0.8486);transform-origin:0 0;-webkit-text-stroke:0.35px #B8B8A8;">1e-05</div>
<div class="t" style="left:3633.0px;top:2512.4px;font-size:29.00px;color:#101010;font-weight:400;font-family:'Liberation Sans', sans-serif;-webkit-text-stroke:0.35px #101010;">m</div>
<div style="left:3283.0px;top:2587.0px;width:522.0px;height:218.0px;border:3px solid #202020;box-sizing:border-box;"></div>
<div class="t" style="left:3296.0px;top:2597.3px;font-size:29.00px;color:#101010;font-weight:400;font-family:'Liberation Sans', sans-serif;transform:scaleX(0.9029);transform-origin:0 0;-webkit-text-stroke:0.35px #101010;">Colors:</div>
<div class="t" style="left:3607.5px;top:2608.8px;font-size:29.00px;color:#101010;font-weight:400;font-family:'Liberation Sans', sans-serif;transform:scaleX(0.8865);transform-origin:0 0;-webkit-text-stroke:0.35px #101010;">Levels:</div>
<div style="left:3696.0px;top:2598.0px;width:89.0px;height:44.0px;background:#fff;border-style:solid;border-width:3px;border-color:#8C8C84 #F4F4EE #F4F4EE #8C8C84;box-sizing:border-box;"></div>
<div class="t" style="left:3704.0px;top:2606.8px;font-size:29.00px;color:#101010;font-weight:400;font-family:'Liberation Sans', sans-serif;transform:scaleX(0.8077);transform-origin:0 0;-webkit-text-stroke:0.35px #101010;">10</div>
<div style="left:3750.0px;top:2602.0px;width:32.0px;height:18.0px;background:linear-gradient(#F4F2E8,#E8E5D6);border-style:solid;border-width:2px 4px 4px 2px;border-color:#F8F8F4 #8A8A80 #8A8A80 #F8F8F4;box-sizing:border-box;"></div>
<div style="left:3750.0px;top:2620.0px;width:32.0px;height:18.0px;background:linear-gradient(#F4F2E8,#E8E5D6);border-style:solid;border-width:2px 4px 4px 2px;border-color:#F8F8F4 #8A8A80 #8A8A80 #F8F8F4;box-sizing:border-box;"></div>
<svg style="left:3750px;top:2602px" width="32" height="36"><path d="M12.76 11.16 L19.24 11.16 L16.0 7.92 Z M12.76 24.84 L19.24 24.84 L16.0 28.08 Z" fill="#000"/></svg>
<svg style="left:3323px;top:2654px" width="26" height="26"><circle cx="13" cy="13" r="11" fill="#fff" stroke="#A8A8A0" stroke-width="2"/></svg>
<div class="t" style="left:3362.6px;top:2651.8px;font-size:29.00px;color:#101010;font-weight:400;font-family:'Liberation Sans', sans-serif;transform:scaleX(0.9226);transform-origin:0 0;-webkit-text-stroke:0.35px #101010;">Grayscale</div>
<svg style="left:3323px;top:2703.8px" width="26" height="26"><circle cx="13" cy="13" r="11" fill="#fff" stroke="#A8A8A0" stroke-width="2"/><circle cx="13" cy="13" r="3.52" fill="#000"/></svg>
<div class="t" style="left:3362.6px;top:2702.3px;font-size:29.00px;color:#101010;font-weight:400;font-family:'Liberation Sans', sans-serif;transform:scaleX(0.8765);transform-origin:0 0;-webkit-text-stroke:0.35px #101010;">Rainbow</div>
<svg style="left:3323px;top:2753.7px" width="26" height="26"><circle cx="13" cy="13" r="11" fill="#fff" stroke="#A8A8A0" stroke-width="2"/></svg>
<div class="t" style="left:3362.6px;top:2751.2px;font-size:29.00px;color:#101010;font-weight:400;font-family:'Liberation Sans', sans-serif;transform:scaleX(0.8748);transform-origin:0 0;-webkit-text-stroke:0.35px #101010;">Custom</div>
<div style="left:3603.0px;top:2660.0px;width:186.0px;height:58.0px;background:#ECE9D8;border:3px solid #202020;box-sizing:border-box;"></div>
<svg style="left:3615px;top:2668px" width="40" height="44"><rect x="3" y="22" width="8" height="18" fill="#2030C0"/><rect x="12" y="8" width="9" height="32" fill="#E8E020"/><rect x="22" y="14" width="10" height="26" fill="#D02010"/><path d="M2 40 L36 40" stroke="#101010" stroke-width="3"/><path d="M3 8 L3 40" stroke="#101010" stroke-width="2"/></svg>
<div class="t" style="left:3654.0px;top:2670.5px;font-size:29.00px;color:#101010;font-weight:400;font-family:'Liberation Sans', sans-serif;transform:scaleX(0.8817);transform-origin:0 0;-webkit-text-stroke:0.35px #101010;">Chart type</div>
<div style="left:3603.0px;top:2732.0px;width:73.0px;height:56.0px;border:3px solid #202020;box-sizing:border-box;"></div>
<div style="left:3715.0px;top:2732.0px;width:74.0px;height:56.0px;border:3px solid #202020;box-sizing:border-box;"></div>
<div style="left:3470.0px;top:2825.5px;width:167.0px;height:78.5px;background:#ECE9D8;border:3px solid #202020;box-sizing:border-box;"></div>
<svg style="left:3484px;top:2842px" width="38" height="48"><path d="M4 12 L24 6 L34 40 L14 46 Z" fill="#D8D8E8" stroke="#303040" stroke-width="2"/><path d="M10 28 L18 36 L28 14" stroke="#E01818" stroke-width="4" fill="none"/></svg>
<div class="t" style="left:3521.0px;top:2846.8px;font-size:29.00px;color:#101010;font-weight:400;font-family:'Liberation Sans', sans-serif;transform:scaleX(0.8690);transform-origin:0 0;-webkit-text-stroke:0.35px #101010;">Apply</div>
<svg style="left:3812px;top:3020px" width="32" height="30"><path d="M30 4 L4 30 M30 12 L12 30 M30 20 L20 30" stroke="#B0AC98" stroke-width="2.5"/></svg>
<div class="t" style="left:2662.0px;top:3076.9px;font-size:68.00px;color:#000;font-weight:400;font-family:'Liberation Serif', serif;transform:scaleX(0.9790);transform-origin:0 0;-webkit-text-stroke:0.3px #000;">(d) fiber mode distribution</div>
</body></html>
